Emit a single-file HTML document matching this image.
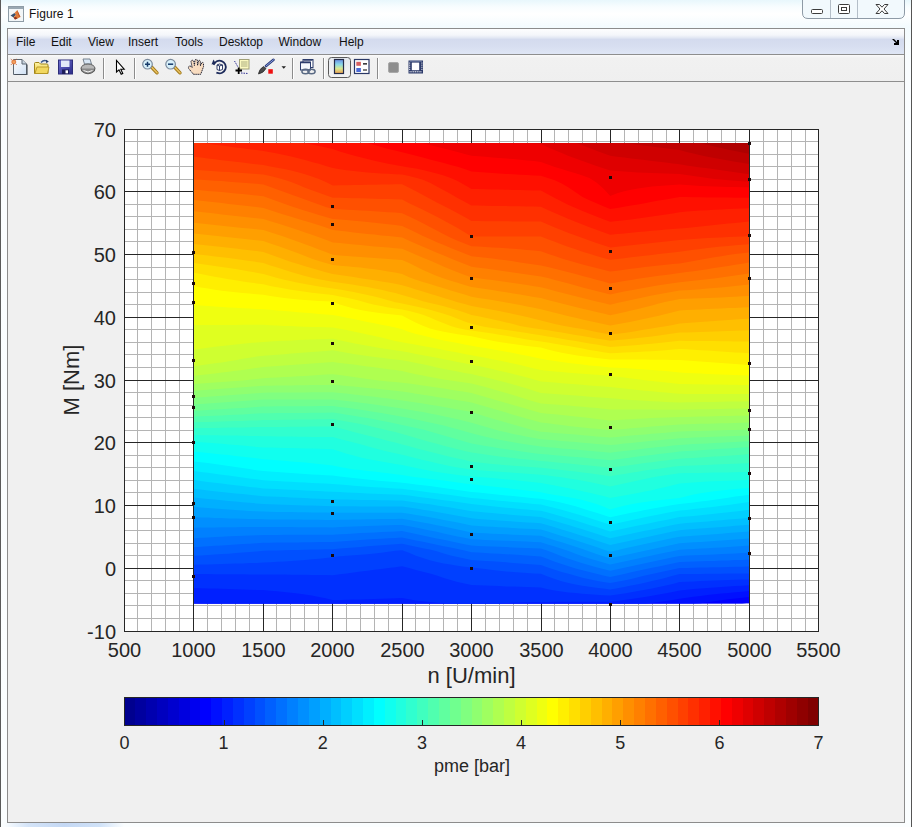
<!DOCTYPE html>
<html><head><meta charset="utf-8"><style>
*{margin:0;padding:0;box-sizing:border-box}
html,body{width:912px;height:827px;overflow:hidden}
body{position:relative;background:linear-gradient(180deg,#e8f7fc 0px,#f8fdff 7px,#ffffff 14px,#f3fbfe 27px,#fafdff 60px,#fbfeff 100%);font-family:"Liberation Sans",sans-serif}
.abs{position:absolute}
#title{left:29px;top:7px;font-size:12px;color:#111;letter-spacing:0.1px}
#client{left:7px;top:28px;width:898px;height:795px;border:1px solid #8c8c8c;background:#f0f0f0}
#menubar{left:0;top:0;width:896px;height:26px;background:linear-gradient(180deg,#fdfdfe 0px,#f4f6fa 6px,#e4e9f4 8.5px,#d4dbee 10.5px,#d7def0 17px,#dfe6f5 25px);border-bottom:1px solid #8e8e8e}
#menubar span{position:absolute;top:6px;font-size:12px;color:#111}
#toolbar{left:0;top:26px;width:896px;height:27px;background:linear-gradient(180deg,#fafafa 0px,#f1f1f1 3px,#efefef 100%);border-bottom:1px solid #8e8e8e}
.sep{position:absolute;top:3px;width:2px;height:21px;background:#8c8c8c;border-right:1px solid #fff}
</style></head><body>
<svg class="abs" style="left:0;top:0" width="912" height="827">
 <path d="M911.5 0V827" stroke="#555" stroke-width="1"/>
 <path d="M0.5 0V827" stroke="#5a5a5a" stroke-width="1"/>
</svg>
<svg class="abs" style="left:8px;top:6px" width="16" height="16" viewBox="0 0 16 16">
 <rect x="0.5" y="0.5" width="15" height="15" fill="#f2f6f8" stroke="#8e9ca6"/>
 <rect x="1" y="1" width="14" height="2" fill="#9aa8b2"/>
 <path d="M2.5 9.5 L6.5 7 L8 8.5 L5.5 11.5 Z" fill="#3a5270"/>
 <path d="M6.5 7 L9.3 4 L11 8 L12.5 11 L9.5 12.5 L7 13.5 L5.5 11.5 L8 8.5 Z" fill="#e07a38"/>
 <path d="M9.3 4 L11 8 L12.5 11 L11 10.5 L9.8 7 Z" fill="#b84c24"/>
 <path d="M5.5 11.5 L7 13.5 L9.5 12.5 L8 11 Z" fill="#8a3020"/>
</svg>
<div id="title" class="abs">Figure 1</div>
<div class="abs" style="left:4px;top:823px;width:120px;height:4px;background:linear-gradient(90deg,rgba(200,222,246,0) 0%,#d4e4f8 20%,#c4d8f4 50%,#d0e2f8 80%,rgba(200,222,246,0) 100%)"></div>
<svg class="abs" style="left:802px;top:0" width="104" height="20">
 <path d="M0.5 0 V13 Q0.5 18.5 6 18.5 H97 Q102.5 18.5 102.5 13 V0" fill="#f2f9fd" stroke="#8e9aa6"/>
 <path d="M28.5 0V18M55.5 0V18" stroke="#b4bec8"/>
 <rect x="9.5" y="9.5" width="11" height="4" rx="1" fill="#fff" stroke="#3c3c3c"/>
 <rect x="36.5" y="4.5" width="11" height="9" rx="1" fill="#fff" stroke="#3c3c3c"/>
 <rect x="39.5" y="7.5" width="5" height="3" fill="#fff" stroke="#3c3c3c"/>
 <path d="M74 4.5 L77.5 4.5 L80 7.2 L82.5 4.5 L86 4.5 L82 9 L86 13.5 L82.5 13.5 L80 10.8 L77.5 13.5 L74 13.5 L78 9 Z" fill="#fff" stroke="#3c3c3c" stroke-linejoin="round"/>
</svg>
<div id="client" class="abs">
 <div id="menubar" class="abs">
  <span style="left:8px">File</span>
  <span style="left:43px">Edit</span>
  <span style="left:80px">View</span>
  <span style="left:120px">Insert</span>
  <span style="left:167px">Tools</span>
  <span style="left:211px">Desktop</span>
  <span style="left:270.5px">Window</span>
  <span style="left:331px">Help</span>
  <svg class="abs" style="left:883px;top:9px" width="10" height="8"><path d="M1 1 L3 1 L6 4 L6 2 L8 2 L8 7 L3 7 L3 5 L5 5 L2 2 Z" fill="#000"/></svg>
 </div>
 <div id="toolbar" class="abs">
  <div class="sep" style="left:95px"></div>
  <div class="sep" style="left:126px"></div>
  <div class="sep" style="left:284px"></div>
  <div class="sep" style="left:315px"></div>
  <div class="sep" style="left:369px"></div>
 </div>
</div>
<svg class="abs" style="left:0;top:0" width="912" height="90">
 <defs>
  <linearGradient id="pg" x1="0" y1="0" x2="1" y2="1"><stop offset="0" stop-color="#ffffff"/><stop offset="1" stop-color="#cfe0f4"/></linearGradient>
  <linearGradient id="fg" x1="0" y1="0" x2="0" y2="1"><stop offset="0" stop-color="#fff6a8"/><stop offset="1" stop-color="#e8c030"/></linearGradient>
  <linearGradient id="cbg" x1="0" y1="0" x2="0" y2="1"><stop offset="0" stop-color="#6a8ee8"/><stop offset="0.35" stop-color="#8ad8e8"/><stop offset="0.65" stop-color="#d8e890"/><stop offset="1" stop-color="#f0a050"/></linearGradient>
  <linearGradient id="btn" x1="0" y1="0" x2="0" y2="1"><stop offset="0" stop-color="#e4e8ee"/><stop offset="1" stop-color="#f4f4f4"/></linearGradient>
  <linearGradient id="sg" x1="0" y1="0" x2="1" y2="1"><stop offset="0" stop-color="#7070d0"/><stop offset="1" stop-color="#2a2a88"/></linearGradient>
 </defs>
 <!-- new -->
 <path d="M13.5 59.5 H22 L26.5 64 V74.5 H13.5 Z" fill="url(#pg)" stroke="#5d6772"/>
 <path d="M22 59.5 V64 H26.5" fill="#c8d4e0" stroke="#5d6772"/>
 <path d="M14.5 74.5 H27 V64.5" fill="none" stroke="#4a525c" stroke-width="1.2"/>
 <circle cx="13.8" cy="62" r="2" fill="#f0a060" stroke="#e06828" stroke-width="0.8"/>
 <path d="M10.8 59 L12 60.2 M16.8 59 L15.6 60.2 M10.8 65 L12 63.8 M16.8 65 L15.6 63.8" stroke="#c05020" stroke-width="0.7"/>
 <!-- open -->
 <path d="M34.5 73.5 V63.5 Q34.5 62.5 35.5 62.5 H39 L40.5 64 H47 Q48 64 48 65 V73.5 Z" fill="url(#fg)" stroke="#a08418"/>
 <path d="M35 73.5 L37 67 H49 L47.5 73.5 Z" fill="#f2d860" stroke="#b09020" stroke-width="0.8"/>
 <path d="M41 62.5 Q43.5 59.5 47 61" fill="none" stroke="#3c5a8c" stroke-width="1.3"/>
 <path d="M46 59.8 L48.8 61.6 L46.2 63.2 Z" fill="#2a3e6a"/>
 <!-- save -->
 <rect x="58.5" y="60" width="14" height="14" fill="url(#sg)" stroke="#2c2c7a"/>
 <rect x="61" y="60.5" width="8.5" height="6.5" fill="#e4eaf8"/>
 <rect x="62" y="69.5" width="7" height="4.5" fill="#1c1c5a"/>
 <rect x="65.5" y="70.3" width="2.5" height="3" fill="#ffffff"/>
 <!-- print -->
 <path d="M83 59 H90 L91.5 64 H84.5 Z" fill="#d8e6f4" stroke="#6c7886" stroke-width="0.9"/>
 <ellipse cx="88" cy="68.5" rx="7" ry="4.5" fill="#b8b8b8" stroke="#5c5c5c"/>
 <path d="M81.5 68.5 V71 Q88 76.5 94.5 71 V68.5" fill="#8a8a8a" stroke="#5c5c5c"/>
 <path d="M83.5 70.5 Q88 73.5 92.5 70.5" stroke="#f4f4f4" stroke-width="1" fill="none"/>
 <!-- arrow -->
 <path d="M116.5 60.5 V72 L119 69.8 L121.2 74.3 L122.8 73.5 L120.8 69.2 H124.2 Z" fill="#fff" stroke="#000" stroke-width="1.1" stroke-linejoin="miter"/>
 <!-- zoom in -->
 <path d="M151.5 67 L157 72.8" stroke="#a07818" stroke-width="3.4" stroke-linecap="round"/>
 <path d="M151.5 67 L157 72.8" stroke="#e8c060" stroke-width="1.6" stroke-linecap="round"/>
 <circle cx="147.5" cy="64.2" r="4.8" fill="#d8f0fa" stroke="#7a8a9c" stroke-width="1.2"/>
 <path d="M145 64.2 H150 M147.5 61.7 V66.7" stroke="#163a6a" stroke-width="1.5"/>
 <!-- zoom out -->
 <path d="M174.5 67 L180 72.8" stroke="#a07818" stroke-width="3.4" stroke-linecap="round"/>
 <path d="M174.5 67 L180 72.8" stroke="#e8c060" stroke-width="1.6" stroke-linecap="round"/>
 <circle cx="170.6" cy="64.2" r="4.8" fill="#d8f0fa" stroke="#7a8a9c" stroke-width="1.2"/>
 <path d="M168 64.2 H173.2" stroke="#163a6a" stroke-width="1.5"/>
 <!-- pan -->
 <path d="M193.5 74.3 L188.6 68.5 Q188 66.5 189.6 66 L191.3 66.4 L192.2 67.6 L191 61.6 Q191.2 60 192.6 60.3 L193.8 61 L194.4 65.5 L195 59.9 Q196 59 197.2 59.8 L197.6 65.3 L198.6 60.6 Q199.6 60 200.3 60.9 L200.4 65.8 L201.8 62.6 Q203 62 203.4 63.1 L203.5 66.7 L200.7 74.3 Z" fill="#f8dcc0" stroke="#1c1c2c" stroke-width="1" stroke-dasharray="1.4 0.7"/>
 <!-- rotate -->
 <circle cx="219.5" cy="67" r="6.3" fill="none" stroke="#1c2a5a" stroke-width="1.8" stroke-dasharray="30 10" transform="rotate(200 219.5 67)"/>
 <path d="M211.5 64.5 L213.5 59.5 L215.8 63.5 Z" fill="#1c2a5a"/>
 <path d="M217 65 L219.5 64 L222.5 65 V69.5 L219.5 70.5 L217 69.5 Z M217 65 L219.5 66 L222.5 65 M219.5 66 V70.5" fill="#fff" stroke="#1c2a5a" stroke-width="0.9"/>
 <!-- data cursor -->
 <rect x="239.5" y="59.5" width="9.5" height="9.5" fill="#fbf8c0" stroke="#a0a078"/>
 <path d="M241 62 H247.5 M241 64 H247.5 M241 66 H247.5" stroke="#9a9a70" stroke-width="0.8"/>
 <path d="M234.5 61 L238 67 M241 73 L248 73.5" stroke="#1a1a8a" stroke-width="0.9" stroke-dasharray="1.5 1"/>
 <path d="M235.5 70.5 H242 M238.7 67.5 V74" stroke="#000" stroke-width="1.8"/>
 <!-- brush -->
 <path d="M266 66 L273.5 59.8" stroke="#2a3a7a" stroke-width="2.6" stroke-linecap="round"/>
 <path d="M266 66 L273.5 59.8" stroke="#8aa0e0" stroke-width="1" stroke-linecap="round"/>
 <path d="M258.5 74 Q259 69 263.5 66.5 L266 68.5 Q263.5 73 258.5 74 Z" fill="#4a4a4a" stroke="#222" stroke-width="0.7"/>
 <rect x="268.3" y="69.2" width="4.5" height="4.5" fill="#ee1010"/>
 <path d="M281.5 66.2 H286 L283.75 68.8 Z" fill="#222"/>
 <!-- link -->
 <rect x="303" y="59.5" width="10" height="8" fill="#fff" stroke="#2c3c6c"/>
 <rect x="300.5" y="62" width="10" height="8" fill="#f4f8fc" stroke="#2c3c6c"/>
 <path d="M303.5 60 H312.5 M301 62.5 H310" stroke="#2c3c6c" stroke-width="1.5"/>
 <ellipse cx="305.5" cy="71.5" rx="3.6" ry="2.3" fill="none" stroke="#5a6a84" stroke-width="1.5"/>
 <ellipse cx="311.5" cy="71.5" rx="3.6" ry="2.3" fill="none" stroke="#5a6a84" stroke-width="1.5"/>
 <!-- pressed colorbar button -->
 <rect x="328.5" y="57.5" width="22" height="20" rx="3" fill="url(#btn)" stroke="#5a5a5a"/>
 <rect x="334.5" y="59.5" width="9" height="14" fill="url(#cbg)" stroke="#242a48" stroke-width="1.2"/>
 <!-- legend -->
 <rect x="354.5" y="59.5" width="14.5" height="14" fill="#fff" stroke="#2a3866" stroke-width="1.2"/>
 <rect x="356.3" y="61.8" width="4.6" height="4" fill="#d86060"/>
 <rect x="356.3" y="68" width="4.6" height="4" fill="#4a6ad8"/>
 <path d="M363 63.8 H367 M363 70 H367" stroke="#000" stroke-width="1.2"/>
 <!-- gray square -->
 <rect x="388.5" y="62.5" width="10" height="10" rx="1.5" fill="#8e8e8e" stroke="#a8a8a8"/>
 <!-- plot tools -->
 <rect x="408.5" y="60.5" width="14.5" height="13" fill="#2c3a6a"/>
 <rect x="411.8" y="62.6" width="7.4" height="7.6" fill="#fff"/>
 <path d="M409.7 62.5 V70 M421.9 62.5 V70" stroke="#fff" stroke-width="0.9" stroke-dasharray="1.2 0.9"/>
 <path d="M409.5 71.8 H422" stroke="#fff" stroke-width="1" stroke-dasharray="1.2 0.6"/>
 <path d="M409.5 61.3 H422" stroke="#8a9ac0" stroke-width="0.6"/>
</svg>

<svg class="abs" style="left:0;top:0" width="912" height="827" font-family="Liberation Sans" shape-rendering="crispEdges">
 <rect x="124" y="129" width="695" height="502" fill="#fff"/>
 <path d="M137.5 129V632M151.5 129V632M165.5 129V632M179.5 129V632M207.5 129V632M221.5 129V632M235.5 129V632M249.5 129V632M276.5 129V632M290.5 129V632M304.5 129V632M318.5 129V632M346.5 129V632M360.5 129V632M374.5 129V632M388.5 129V632M415.5 129V632M429.5 129V632M443.5 129V632M457.5 129V632M485.5 129V632M499.5 129V632M513.5 129V632M527.5 129V632M554.5 129V632M568.5 129V632M582.5 129V632M596.5 129V632M624.5 129V632M638.5 129V632M652.5 129V632M666.5 129V632M693.5 129V632M707.5 129V632M721.5 129V632M735.5 129V632M763.5 129V632M777.5 129V632M791.5 129V632M805.5 129V632M124 141.5H819M124 154.5H819M124 166.5H819M124 179.5H819M124 204.5H819M124 216.5H819M124 229.5H819M124 241.5H819M124 267.5H819M124 279.5H819M124 292.5H819M124 304.5H819M124 329.5H819M124 342.5H819M124 354.5H819M124 367.5H819M124 392.5H819M124 405.5H819M124 417.5H819M124 430.5H819M124 455.5H819M124 467.5H819M124 480.5H819M124 492.5H819M124 518.5H819M124 530.5H819M124 543.5H819M124 555.5H819M124 580.5H819M124 593.5H819M124 605.5H819M124 618.5H819" stroke="#b4b4b4" stroke-width="1" fill="none"/>
 <path d="M124.5 129V632M193.5 129V632M263.5 129V632M332.5 129V632M402.5 129V632M471.5 129V632M541.5 129V632M610.5 129V632M679.5 129V632M749.5 129V632M818.5 129V632M124 129.5H819M124 191.5H819M124 254.5H819M124 317.5H819M124 380.5H819M124 442.5H819M124 505.5H819M124 568.5H819M124 631.5H819" stroke="#262626" stroke-width="1" fill="none"/>
 <g shape-rendering="auto">
<rect x="194.0" y="143.0" width="555.0" height="460.4" fill="#0000ef"/>
<path d="M194.0 143.0 L194.0 603.5 L200.9 603.5 L207.9 603.5 L214.8 603.5 L221.8 603.5 L228.7 603.5 L235.6 603.5 L242.6 603.5 L249.5 603.5 L256.4 603.5 L263.4 603.5 L270.3 603.5 L277.2 603.5 L284.2 603.5 L291.1 603.5 L298.1 603.5 L305.0 603.5 L311.9 603.5 L318.9 603.5 L325.8 603.5 L332.8 603.5 L339.7 603.5 L346.6 603.5 L353.6 603.5 L360.5 603.5 L367.4 603.5 L374.4 603.5 L381.3 603.5 L388.2 603.5 L395.2 603.5 L402.1 603.5 L409.1 603.5 L416.0 603.5 L422.9 603.5 L429.9 603.5 L436.8 603.5 L443.8 603.5 L450.7 603.5 L457.6 603.5 L464.6 603.5 L471.5 603.5 L478.4 603.5 L485.4 603.5 L492.3 603.5 L499.2 603.5 L506.2 603.5 L513.1 603.5 L520.1 603.5 L527.0 603.5 L533.9 603.5 L540.9 603.5 L547.8 603.5 L554.8 603.5 L561.7 603.5 L568.6 603.5 L575.6 603.5 L582.5 603.5 L589.4 603.5 L596.4 603.5 L603.3 603.5 L610.2 603.5 L617.2 603.5 L624.1 603.5 L631.1 603.5 L638.0 603.5 L644.9 603.5 L651.9 603.5 L658.8 603.5 L665.8 603.5 L672.7 603.5 L679.6 603.5 L686.6 603.5 L693.5 603.5 L700.4 603.5 L707.4 603.5 L714.3 603.5 L721.2 603.5 L728.2 603.5 L735.1 603.5 L742.1 603.5 L749.0 602.8 L749.0 143.0 Z" fill="#0000ff"/>
<path d="M194.0 143.0 L194.0 603.5 L200.9 603.5 L207.9 603.5 L214.8 603.5 L221.8 603.5 L228.7 603.5 L235.6 603.5 L242.6 603.5 L249.5 603.5 L256.4 603.5 L263.4 603.5 L270.3 603.5 L277.2 603.5 L284.2 603.5 L291.1 603.5 L298.1 603.5 L305.0 603.5 L311.9 603.5 L318.9 603.5 L325.8 603.5 L332.8 603.5 L339.7 603.5 L346.6 603.5 L353.6 603.5 L360.5 603.5 L367.4 603.5 L374.4 603.5 L381.3 603.5 L388.2 603.5 L395.2 603.5 L402.1 603.5 L409.1 603.5 L416.0 603.5 L422.9 603.5 L429.9 603.5 L436.8 603.5 L443.8 603.5 L450.7 603.5 L457.6 603.5 L464.6 603.5 L471.5 603.5 L478.4 603.5 L485.4 603.5 L492.3 603.5 L499.2 603.5 L506.2 603.5 L513.1 603.5 L520.1 603.5 L527.0 603.5 L533.9 603.5 L540.9 603.5 L547.8 603.5 L554.8 603.5 L561.7 603.5 L568.6 603.5 L575.6 603.5 L582.5 603.5 L589.4 603.5 L596.4 603.5 L603.3 603.5 L610.2 603.5 L617.2 603.5 L624.1 603.5 L631.1 603.5 L638.0 603.5 L644.9 603.5 L651.9 603.5 L658.8 603.5 L665.8 603.5 L672.7 603.5 L679.6 603.5 L686.6 603.5 L693.5 603.5 L700.4 603.3 L707.4 602.2 L714.3 601.2 L721.2 600.2 L728.2 599.3 L735.1 598.5 L742.1 597.7 L749.0 597.0 L749.0 143.0 Z" fill="#0010ff"/>
<path d="M194.0 143.0 L194.0 603.1 L200.9 603.3 L207.9 603.5 L214.8 603.5 L221.8 603.5 L228.7 603.5 L235.6 603.5 L242.6 603.5 L249.5 603.5 L256.4 603.5 L263.4 603.5 L270.3 603.5 L277.2 603.5 L284.2 603.5 L291.1 603.5 L298.1 603.5 L305.0 603.5 L311.9 603.5 L318.9 603.5 L325.8 603.5 L332.8 603.5 L339.7 603.5 L346.6 603.5 L353.6 603.5 L360.5 603.5 L367.4 603.5 L374.4 603.5 L381.3 603.5 L388.2 603.5 L395.2 603.5 L402.1 603.5 L409.1 603.5 L416.0 603.5 L422.9 603.5 L429.9 603.5 L436.8 603.5 L443.8 603.5 L450.7 603.5 L457.6 603.5 L464.6 603.5 L471.5 603.5 L478.4 603.5 L485.4 603.5 L492.3 603.5 L499.2 603.5 L506.2 603.5 L513.1 603.5 L520.1 603.5 L527.0 603.5 L533.9 603.5 L540.9 603.5 L547.8 603.5 L554.8 603.5 L561.7 603.5 L568.6 603.5 L575.6 603.5 L582.5 603.5 L589.4 603.5 L596.4 603.5 L603.3 603.5 L610.2 603.5 L617.2 603.5 L624.1 603.5 L631.1 603.5 L638.0 603.5 L644.9 603.5 L651.9 603.1 L658.8 602.1 L665.8 601.1 L672.7 600.0 L679.6 598.8 L686.6 597.7 L693.5 596.8 L700.4 595.9 L707.4 595.1 L714.3 594.3 L721.2 593.6 L728.2 592.9 L735.1 592.3 L742.1 591.7 L749.0 591.1 L749.0 143.0 Z" fill="#0020ff"/>
<path d="M194.0 143.0 L194.0 588.0 L200.9 588.2 L207.9 588.4 L214.8 588.6 L221.8 588.8 L228.7 589.0 L235.6 589.2 L242.6 589.5 L249.5 589.7 L256.4 589.9 L263.4 590.1 L270.3 590.7 L277.2 591.3 L284.2 592.0 L291.1 592.7 L298.1 593.6 L305.0 594.5 L311.9 595.6 L318.9 596.9 L325.8 598.3 L332.8 600.0 L339.7 599.9 L346.6 599.7 L353.6 599.6 L360.5 599.4 L367.4 599.2 L374.4 599.0 L381.3 598.8 L388.2 598.6 L395.2 598.3 L402.1 598.0 L409.1 599.3 L416.0 600.4 L422.9 601.3 L429.9 602.1 L436.8 602.7 L443.8 603.2 L450.7 603.5 L457.6 603.5 L464.6 603.5 L471.5 603.5 L478.4 603.5 L485.4 603.5 L492.3 603.5 L499.2 603.4 L506.2 603.1 L513.1 602.8 L520.1 602.5 L527.0 602.3 L533.9 602.1 L540.9 601.9 L547.8 601.9 L554.8 601.8 L561.7 601.8 L568.6 601.8 L575.6 601.8 L582.5 601.8 L589.4 601.8 L596.4 601.8 L603.3 601.8 L610.2 601.8 L617.2 600.9 L624.1 600.0 L631.1 599.1 L638.0 598.0 L644.9 596.9 L651.9 595.8 L658.8 594.6 L665.8 593.3 L672.7 591.9 L679.6 590.5 L686.6 589.8 L693.5 589.1 L700.4 588.5 L707.4 587.9 L714.3 587.4 L721.2 586.9 L728.2 586.5 L735.1 586.1 L742.1 585.7 L749.0 585.3 L749.0 143.0 Z" fill="#0030ff"/>
<path d="M194.0 143.0 L194.0 574.1 L200.9 574.1 L207.9 574.1 L214.8 574.2 L221.8 574.2 L228.7 574.2 L235.6 574.3 L242.6 574.3 L249.5 574.4 L256.4 574.4 L263.4 574.4 L270.3 574.5 L277.2 574.5 L284.2 574.6 L291.1 574.7 L298.1 574.8 L305.0 574.8 L311.9 574.9 L318.9 575.0 L325.8 575.1 L332.8 575.2 L339.7 574.3 L346.6 573.4 L353.6 572.5 L360.5 571.6 L367.4 570.7 L374.4 569.8 L381.3 568.9 L388.2 568.1 L395.2 567.2 L402.1 566.3 L409.1 568.1 L416.0 569.9 L422.9 571.7 L429.9 573.5 L436.8 575.6 L443.8 578.0 L450.7 580.1 L457.6 581.9 L464.6 583.5 L471.5 584.9 L478.4 585.2 L485.4 585.5 L492.3 585.8 L499.2 586.1 L506.2 586.4 L513.1 586.6 L520.1 586.8 L527.0 587.1 L533.9 587.3 L540.9 587.5 L547.8 589.2 L554.8 590.5 L561.7 591.5 L568.6 592.4 L575.6 593.1 L582.5 593.8 L589.4 594.3 L596.4 594.8 L603.3 595.2 L610.2 595.6 L617.2 594.6 L624.1 593.5 L631.1 592.3 L638.0 591.1 L644.9 589.8 L651.9 588.5 L658.8 587.0 L665.8 585.5 L672.7 583.9 L679.6 582.1 L686.6 581.8 L693.5 581.4 L700.4 581.1 L707.4 580.8 L714.3 580.5 L721.2 580.3 L728.2 580.1 L735.1 579.8 L742.1 579.6 L749.0 579.4 L749.0 143.0 Z" fill="#0040ff"/>
<path d="M194.0 143.0 L194.0 564.8 L200.9 564.6 L207.9 564.4 L214.8 564.2 L221.8 564.0 L228.7 563.8 L235.6 563.6 L242.6 563.4 L249.5 563.1 L256.4 562.9 L263.4 562.6 L270.3 562.2 L277.2 561.8 L284.2 561.4 L291.1 560.9 L298.1 560.4 L305.0 559.9 L311.9 559.3 L318.9 558.7 L325.8 558.0 L332.8 557.2 L339.7 556.3 L346.6 555.7 L353.6 555.3 L360.5 554.8 L367.4 554.2 L374.4 553.5 L381.3 552.7 L388.2 551.7 L395.2 550.7 L402.1 550.2 L409.1 552.7 L416.0 555.7 L422.9 558.1 L429.9 560.2 L436.8 561.9 L443.8 563.4 L450.7 564.6 L457.6 565.8 L464.6 566.7 L471.5 567.6 L478.4 568.2 L485.4 569.0 L492.3 569.9 L499.2 570.7 L506.2 571.4 L513.1 572.0 L520.1 572.5 L527.0 573.0 L533.9 573.4 L540.9 573.8 L547.8 576.5 L554.8 579.1 L561.7 581.2 L568.6 583.0 L575.6 584.5 L582.5 585.7 L589.4 586.8 L596.4 587.8 L603.3 588.6 L610.2 589.4 L617.2 588.2 L624.1 586.9 L631.1 585.6 L638.0 584.2 L644.9 582.7 L651.9 581.1 L658.8 579.5 L665.8 577.7 L672.7 575.8 L679.6 574.1 L686.6 574.0 L693.5 574.0 L700.4 573.9 L707.4 573.8 L714.3 573.7 L721.2 573.7 L728.2 573.6 L735.1 573.5 L742.1 573.4 L749.0 573.4 L749.0 143.0 Z" fill="#0050ff"/>
<path d="M194.0 143.0 L194.0 555.8 L200.9 555.4 L207.9 555.0 L214.8 554.6 L221.8 554.1 L228.7 553.7 L235.6 553.1 L242.6 552.6 L249.5 552.0 L256.4 551.4 L263.4 550.8 L270.3 550.6 L277.2 550.4 L284.2 550.3 L291.1 550.1 L298.1 549.9 L305.0 549.8 L311.9 549.6 L318.9 549.5 L325.8 549.3 L332.8 549.2 L339.7 548.6 L346.6 548.0 L353.6 547.4 L360.5 546.9 L367.4 546.3 L374.4 545.8 L381.3 545.3 L388.2 544.8 L395.2 544.3 L402.1 543.8 L409.1 545.3 L416.0 546.7 L422.9 548.2 L429.9 549.6 L436.8 551.2 L443.8 553.5 L450.7 555.4 L457.6 557.1 L464.6 558.6 L471.5 559.9 L478.4 560.4 L485.4 560.9 L492.3 561.3 L499.2 561.8 L506.2 562.3 L513.1 562.9 L520.1 563.4 L527.0 563.9 L533.9 564.5 L540.9 565.1 L547.8 567.5 L554.8 569.8 L561.7 571.9 L568.6 573.8 L575.6 575.8 L582.5 577.7 L589.4 579.3 L596.4 580.8 L603.3 582.0 L610.2 583.1 L617.2 581.8 L624.1 580.4 L631.1 578.9 L638.0 577.3 L644.9 575.6 L651.9 574.0 L658.8 572.5 L665.8 571.0 L672.7 569.5 L679.6 568.0 L686.6 567.9 L693.5 567.7 L700.4 567.6 L707.4 567.5 L714.3 567.3 L721.2 567.2 L728.2 567.0 L735.1 566.8 L742.1 566.7 L749.0 566.5 L749.0 143.0 Z" fill="#0060ff"/>
<path d="M194.0 143.0 L194.0 547.2 L200.9 546.7 L207.9 546.3 L214.8 545.8 L221.8 545.4 L228.7 544.9 L235.6 544.5 L242.6 544.1 L249.5 543.7 L256.4 543.2 L263.4 542.8 L270.3 542.7 L277.2 542.6 L284.2 542.5 L291.1 542.5 L298.1 542.4 L305.0 542.3 L311.9 542.2 L318.9 542.1 L325.8 542.0 L332.8 541.9 L339.7 541.4 L346.6 540.9 L353.6 540.5 L360.5 540.0 L367.4 539.6 L374.4 539.1 L381.3 538.7 L388.2 538.3 L395.2 537.9 L402.1 537.5 L409.1 538.9 L416.0 540.4 L422.9 541.8 L429.9 543.3 L436.8 544.7 L443.8 546.2 L450.7 547.6 L457.6 549.1 L464.6 550.6 L471.5 552.2 L478.4 552.6 L485.4 553.0 L492.3 553.4 L499.2 553.8 L506.2 554.2 L513.1 554.6 L520.1 555.0 L527.0 555.5 L533.9 555.9 L540.9 556.4 L547.8 559.1 L554.8 561.7 L561.7 564.1 L568.6 566.3 L575.6 568.4 L582.5 570.3 L589.4 572.1 L596.4 573.8 L603.3 575.4 L610.2 576.9 L617.2 575.4 L624.1 573.9 L631.1 572.3 L638.0 570.8 L644.9 569.3 L651.9 567.8 L658.8 566.4 L665.8 564.9 L672.7 563.4 L679.6 561.9 L686.6 561.7 L693.5 561.5 L700.4 561.3 L707.4 561.1 L714.3 560.9 L721.2 560.6 L728.2 560.4 L735.1 560.1 L742.1 559.9 L749.0 559.6 L749.0 143.0 Z" fill="#0070ff"/>
<path d="M194.0 143.0 L194.0 538.2 L200.9 537.8 L207.9 537.4 L214.8 537.0 L221.8 536.7 L228.7 536.3 L235.6 536.0 L242.6 535.7 L249.5 535.4 L256.4 535.2 L263.4 534.9 L270.3 534.9 L277.2 534.9 L284.2 534.8 L291.1 534.8 L298.1 534.8 L305.0 534.8 L311.9 534.7 L318.9 534.7 L325.8 534.7 L332.8 534.7 L339.7 534.3 L346.6 533.9 L353.6 533.5 L360.5 533.1 L367.4 532.8 L374.4 532.4 L381.3 532.1 L388.2 531.8 L395.2 531.4 L402.1 531.1 L409.1 532.5 L416.0 534.0 L422.9 535.5 L429.9 536.9 L436.8 538.4 L443.8 539.8 L450.7 541.3 L457.6 542.7 L464.6 544.2 L471.5 545.6 L478.4 545.9 L485.4 546.2 L492.3 546.5 L499.2 546.8 L506.2 547.1 L513.1 547.4 L520.1 547.7 L527.0 548.0 L533.9 548.3 L540.9 548.6 L547.8 550.8 L554.8 553.6 L561.7 556.3 L568.6 558.8 L575.6 561.1 L582.5 563.3 L589.4 565.3 L596.4 567.2 L603.3 569.0 L610.2 570.7 L617.2 569.2 L624.1 567.7 L631.1 566.2 L638.0 564.7 L644.9 563.2 L651.9 561.7 L658.8 560.2 L665.8 558.8 L672.7 557.3 L679.6 555.9 L686.6 555.6 L693.5 555.3 L700.4 555.0 L707.4 554.7 L714.3 554.4 L721.2 554.1 L728.2 553.8 L735.1 553.4 L742.1 553.1 L749.0 552.7 L749.0 143.0 Z" fill="#0080ff"/>
<path d="M194.0 143.0 L194.0 527.7 L200.9 527.6 L207.9 527.5 L214.8 527.4 L221.8 527.3 L228.7 527.3 L235.6 527.2 L242.6 527.1 L249.5 527.1 L256.4 527.0 L263.4 527.0 L270.3 527.0 L277.2 527.1 L284.2 527.1 L291.1 527.1 L298.1 527.2 L305.0 527.2 L311.9 527.2 L318.9 527.3 L325.8 527.3 L332.8 527.4 L339.7 527.1 L346.6 526.8 L353.6 526.5 L360.5 526.3 L367.4 526.0 L374.4 525.8 L381.3 525.5 L388.2 525.3 L395.2 525.1 L402.1 524.9 L409.1 526.2 L416.0 527.5 L422.9 528.9 L429.9 530.4 L436.8 531.8 L443.8 533.4 L450.7 534.9 L457.6 536.4 L464.6 537.8 L471.5 539.3 L478.4 539.6 L485.4 539.9 L492.3 540.2 L499.2 540.5 L506.2 540.7 L513.1 541.0 L520.1 541.3 L527.0 541.6 L533.9 541.9 L540.9 542.2 L547.8 544.4 L554.8 546.6 L561.7 548.8 L568.6 551.1 L575.6 553.7 L582.5 556.2 L589.4 558.5 L596.4 560.6 L603.3 562.6 L610.2 564.5 L617.2 563.0 L624.1 561.5 L631.1 560.0 L638.0 558.5 L644.9 557.0 L651.9 555.6 L658.8 554.1 L665.8 552.6 L672.7 551.2 L679.6 549.7 L686.6 549.3 L693.5 549.0 L700.4 548.6 L707.4 548.2 L714.3 547.8 L721.2 547.4 L728.2 546.9 L735.1 546.5 L742.1 546.1 L749.0 545.6 L749.0 143.0 Z" fill="#008fff"/>
<path d="M194.0 143.0 L194.0 517.1 L200.9 517.4 L207.9 517.6 L214.8 517.9 L221.8 518.1 L228.7 518.4 L235.6 518.6 L242.6 518.8 L249.5 519.0 L256.4 519.1 L263.4 519.3 L270.3 519.4 L277.2 519.4 L284.2 519.5 L291.1 519.6 L298.1 519.6 L305.0 519.7 L311.9 519.8 L318.9 519.8 L325.8 519.9 L332.8 520.0 L339.7 519.8 L346.6 519.7 L353.6 519.6 L360.5 519.4 L367.4 519.3 L374.4 519.2 L381.3 519.1 L388.2 519.0 L395.2 518.9 L402.1 518.8 L409.1 520.0 L416.0 521.2 L422.9 522.5 L429.9 523.8 L436.8 525.2 L443.8 526.6 L450.7 528.0 L457.6 529.5 L464.6 531.1 L471.5 532.6 L478.4 533.0 L485.4 533.3 L492.3 533.7 L499.2 534.0 L506.2 534.3 L513.1 534.7 L520.1 535.0 L527.0 535.3 L533.9 535.6 L540.9 535.8 L547.8 538.0 L554.8 540.2 L561.7 542.3 L568.6 544.6 L575.6 546.8 L582.5 549.1 L589.4 551.4 L596.4 553.9 L603.3 556.2 L610.2 558.3 L617.2 556.8 L624.1 555.2 L631.1 553.7 L638.0 552.2 L644.9 550.7 L651.9 549.2 L658.8 547.7 L665.8 546.2 L672.7 544.7 L679.6 543.2 L686.6 542.8 L693.5 542.3 L700.4 541.9 L707.4 541.4 L714.3 541.0 L721.2 540.5 L728.2 540.0 L735.1 539.5 L742.1 539.0 L749.0 538.5 L749.0 143.0 Z" fill="#009fff"/>
<path d="M194.0 143.0 L194.0 506.8 L200.9 507.4 L207.9 508.0 L214.8 508.5 L221.8 509.1 L228.7 509.5 L235.6 510.0 L242.6 510.4 L249.5 510.9 L256.4 511.3 L263.4 511.6 L270.3 511.8 L277.2 511.9 L284.2 512.0 L291.1 512.1 L298.1 512.2 L305.0 512.3 L311.9 512.4 L318.9 512.5 L325.8 512.6 L332.8 512.7 L339.7 512.7 L346.6 512.7 L353.6 512.7 L360.5 512.7 L367.4 512.7 L374.4 512.7 L381.3 512.7 L388.2 512.7 L395.2 512.7 L402.1 512.7 L409.1 513.8 L416.0 514.9 L422.9 516.1 L429.9 517.3 L436.8 518.6 L443.8 519.9 L450.7 521.2 L457.6 522.6 L464.6 524.0 L471.5 525.5 L478.4 525.9 L485.4 526.4 L492.3 526.8 L499.2 527.2 L506.2 527.6 L513.1 528.0 L520.1 528.4 L527.0 528.8 L533.9 529.1 L540.9 529.5 L547.8 531.6 L554.8 533.7 L561.7 535.9 L568.6 538.1 L575.6 540.3 L582.5 542.5 L589.4 544.8 L596.4 547.0 L603.3 549.4 L610.2 551.7 L617.2 550.2 L624.1 548.6 L631.1 547.1 L638.0 545.6 L644.9 544.1 L651.9 542.6 L658.8 541.1 L665.8 539.6 L672.7 538.1 L679.6 536.7 L686.6 536.2 L693.5 535.7 L700.4 535.2 L707.4 534.7 L714.3 534.2 L721.2 533.7 L728.2 533.1 L735.1 532.6 L742.1 532.1 L749.0 531.5 L749.0 143.0 Z" fill="#00afff"/>
<path d="M194.0 143.0 L194.0 497.6 L200.9 498.3 L207.9 499.0 L214.8 499.6 L221.8 500.3 L228.7 500.9 L235.6 501.6 L242.6 502.2 L249.5 502.8 L256.4 503.4 L263.4 503.9 L270.3 504.2 L277.2 504.5 L284.2 504.7 L291.1 504.9 L298.1 505.2 L305.0 505.4 L311.9 505.6 L318.9 505.8 L325.8 506.0 L332.8 506.2 L339.7 506.3 L346.6 506.3 L353.6 506.3 L360.5 506.4 L367.4 506.4 L374.4 506.4 L381.3 506.5 L388.2 506.5 L395.2 506.5 L402.1 506.6 L409.1 507.6 L416.0 508.6 L422.9 509.7 L429.9 510.8 L436.8 512.0 L443.8 513.2 L450.7 514.4 L457.6 515.7 L464.6 517.0 L471.5 518.3 L478.4 518.9 L485.4 519.4 L492.3 520.0 L499.2 520.5 L506.2 521.0 L513.1 521.4 L520.1 521.9 L527.0 522.4 L533.9 522.8 L540.9 523.2 L547.8 525.3 L554.8 527.3 L561.7 529.4 L568.6 531.6 L575.6 533.7 L582.5 535.9 L589.4 538.1 L596.4 540.4 L603.3 542.7 L610.2 545.0 L617.2 543.4 L624.1 541.9 L631.1 540.4 L638.0 538.9 L644.9 537.4 L651.9 536.0 L658.8 534.5 L665.8 533.1 L672.7 531.6 L679.6 530.2 L686.6 529.6 L693.5 529.1 L700.4 528.6 L707.4 528.0 L714.3 527.5 L721.2 526.9 L728.2 526.4 L735.1 525.8 L742.1 525.2 L749.0 524.7 L749.0 143.0 Z" fill="#00bfff"/>
<path d="M194.0 143.0 L194.0 488.8 L200.9 489.6 L207.9 490.4 L214.8 491.2 L221.8 492.0 L228.7 492.7 L235.6 493.4 L242.6 494.1 L249.5 494.8 L256.4 495.5 L263.4 496.2 L270.3 496.5 L277.2 496.8 L284.2 497.1 L291.1 497.5 L298.1 497.8 L305.0 498.1 L311.9 498.4 L318.9 498.7 L325.8 499.0 L332.8 499.3 L339.7 499.5 L346.6 499.6 L353.6 499.8 L360.5 499.9 L367.4 500.0 L374.4 500.1 L381.3 500.2 L388.2 500.3 L395.2 500.4 L402.1 500.5 L409.1 501.5 L416.0 502.4 L422.9 503.4 L429.9 504.3 L436.8 505.4 L443.8 506.5 L450.7 507.6 L457.6 508.7 L464.6 509.9 L471.5 511.2 L478.4 511.8 L485.4 512.5 L492.3 513.1 L499.2 513.7 L506.2 514.3 L513.1 514.9 L520.1 515.4 L527.0 516.0 L533.9 516.5 L540.9 517.0 L547.8 519.0 L554.8 521.0 L561.7 523.0 L568.6 525.1 L575.6 527.2 L582.5 529.3 L589.4 531.5 L596.4 533.7 L603.3 536.0 L610.2 538.2 L617.2 536.7 L624.1 535.2 L631.1 533.7 L638.0 532.3 L644.9 530.8 L651.9 529.4 L658.8 527.9 L665.8 526.5 L672.7 525.1 L679.6 523.7 L686.6 523.1 L693.5 522.5 L700.4 522.0 L707.4 521.4 L714.3 520.8 L721.2 520.2 L728.2 519.6 L735.1 519.0 L742.1 518.4 L749.0 517.7 L749.0 143.0 Z" fill="#00cfff"/>
<path d="M194.0 143.0 L194.0 480.1 L200.9 481.0 L207.9 481.9 L214.8 482.8 L221.8 483.6 L228.7 484.5 L235.6 485.3 L242.6 486.1 L249.5 486.9 L256.4 487.6 L263.4 488.4 L270.3 488.7 L277.2 489.1 L284.2 489.4 L291.1 489.8 L298.1 490.1 L305.0 490.4 L311.9 490.8 L318.9 491.1 L325.8 491.5 L332.8 491.8 L339.7 492.1 L346.6 492.5 L353.6 492.8 L360.5 493.1 L367.4 493.4 L374.4 493.7 L381.3 493.9 L388.2 494.2 L395.2 494.4 L402.1 494.7 L409.1 495.6 L416.0 496.5 L422.9 497.4 L429.9 498.3 L436.8 499.3 L443.8 500.2 L450.7 501.1 L457.6 502.1 L464.6 503.0 L471.5 504.0 L478.4 504.8 L485.4 505.5 L492.3 506.3 L499.2 507.0 L506.2 507.7 L513.1 508.3 L520.1 509.0 L527.0 509.6 L533.9 510.2 L540.9 510.8 L547.8 512.6 L554.8 514.5 L561.7 516.4 L568.6 518.5 L575.6 520.6 L582.5 522.8 L589.4 524.9 L596.4 527.1 L603.3 529.3 L610.2 531.5 L617.2 530.0 L624.1 528.5 L631.1 527.1 L638.0 525.6 L644.9 524.2 L651.9 522.8 L658.8 521.3 L665.8 519.9 L672.7 518.5 L679.6 517.1 L686.6 516.5 L693.5 515.9 L700.4 515.2 L707.4 514.5 L714.3 513.8 L721.2 513.1 L728.2 512.3 L735.1 511.5 L742.1 510.7 L749.0 509.8 L749.0 143.0 Z" fill="#00dfff"/>
<path d="M194.0 143.0 L194.0 470.9 L200.9 471.9 L207.9 472.8 L214.8 473.8 L221.8 474.7 L228.7 475.6 L235.6 476.6 L242.6 477.5 L249.5 478.4 L256.4 479.3 L263.4 480.3 L270.3 480.7 L277.2 481.1 L284.2 481.4 L291.1 481.8 L298.1 482.2 L305.0 482.5 L311.9 482.9 L318.9 483.2 L325.8 483.5 L332.8 483.9 L339.7 484.5 L346.6 485.1 L353.6 485.7 L360.5 486.2 L367.4 486.7 L374.4 487.2 L381.3 487.6 L388.2 488.0 L395.2 488.4 L402.1 488.8 L409.1 489.7 L416.0 490.6 L422.9 491.5 L429.9 492.4 L436.8 493.3 L443.8 494.2 L450.7 495.1 L457.6 496.1 L464.6 497.0 L471.5 497.9 L478.4 498.6 L485.4 499.3 L492.3 500.0 L499.2 500.7 L506.2 501.3 L513.1 502.0 L520.1 502.6 L527.0 503.3 L533.9 503.9 L540.9 504.6 L547.8 506.2 L554.8 507.9 L561.7 509.8 L568.6 511.7 L575.6 513.7 L582.5 515.8 L589.4 517.9 L596.4 520.2 L603.3 522.6 L610.2 524.7 L617.2 523.3 L624.1 521.8 L631.1 520.2 L638.0 518.7 L644.9 517.2 L651.9 515.8 L658.8 514.4 L665.8 513.1 L672.7 511.8 L679.6 510.6 L686.6 509.9 L693.5 509.1 L700.4 508.3 L707.4 507.5 L714.3 506.7 L721.2 505.8 L728.2 504.9 L735.1 504.0 L742.1 503.0 L749.0 501.9 L749.0 143.0 Z" fill="#00efff"/>
<path d="M194.0 143.0 L194.0 461.5 L200.9 462.3 L207.9 463.1 L214.8 464.0 L221.8 464.9 L228.7 465.9 L235.6 466.9 L242.6 467.9 L249.5 469.1 L256.4 470.2 L263.4 471.1 L270.3 471.6 L277.2 472.1 L284.2 472.6 L291.1 473.0 L298.1 473.5 L305.0 473.9 L311.9 474.4 L318.9 474.8 L325.8 475.2 L332.8 475.6 L339.7 476.4 L346.6 477.3 L353.6 478.0 L360.5 478.8 L367.4 479.5 L374.4 480.2 L381.3 480.9 L388.2 481.5 L395.2 482.1 L402.1 482.7 L409.1 483.6 L416.0 484.4 L422.9 485.2 L429.9 486.0 L436.8 486.9 L443.8 487.9 L450.7 488.9 L457.6 490.0 L464.6 491.0 L471.5 491.9 L478.4 492.6 L485.4 493.3 L492.3 494.0 L499.2 494.8 L506.2 495.4 L513.1 496.1 L520.1 496.8 L527.0 497.5 L533.9 498.2 L540.9 498.8 L547.8 500.0 L554.8 501.3 L561.7 502.7 L568.6 504.4 L575.6 506.3 L582.5 508.5 L589.4 510.7 L596.4 512.8 L603.3 515.0 L610.2 517.3 L617.2 515.8 L624.1 514.3 L631.1 512.8 L638.0 511.4 L644.9 510.1 L651.9 508.7 L658.8 507.4 L665.8 506.2 L672.7 505.1 L679.6 504.1 L686.6 503.3 L693.5 502.5 L700.4 501.6 L707.4 500.7 L714.3 499.8 L721.2 498.8 L728.2 497.7 L735.1 496.6 L742.1 495.7 L749.0 494.8 L749.0 143.0 Z" fill="#00ffff"/>
<path d="M194.0 143.0 L194.0 451.7 L200.9 452.3 L207.9 453.0 L214.8 453.7 L221.8 454.4 L228.7 455.1 L235.6 455.9 L242.6 456.7 L249.5 457.5 L256.4 458.3 L263.4 459.3 L270.3 459.7 L277.2 460.2 L284.2 460.8 L291.1 461.4 L298.1 462.0 L305.0 462.6 L311.9 463.3 L318.9 464.0 L325.8 464.7 L332.8 465.5 L339.7 467.0 L346.6 468.3 L353.6 469.4 L360.5 470.1 L367.4 470.9 L374.4 471.6 L381.3 472.4 L388.2 473.3 L395.2 474.2 L402.1 475.1 L409.1 476.3 L416.0 477.3 L422.9 478.1 L429.9 478.9 L436.8 479.7 L443.8 480.6 L450.7 481.5 L457.6 482.4 L464.6 483.4 L471.5 484.3 L478.4 485.1 L485.4 485.8 L492.3 486.5 L499.2 487.3 L506.2 488.1 L513.1 488.9 L520.1 489.7 L527.0 490.5 L533.9 491.3 L540.9 492.3 L547.8 493.7 L554.8 494.9 L561.7 496.0 L568.6 497.2 L575.6 498.5 L582.5 500.1 L589.4 501.9 L596.4 504.0 L603.3 506.5 L610.2 509.5 L617.2 507.5 L624.1 505.8 L631.1 504.3 L638.0 503.1 L644.9 502.0 L651.9 501.0 L658.8 500.2 L665.8 499.4 L672.7 498.8 L679.6 498.1 L686.6 496.2 L693.5 494.6 L700.4 493.3 L707.4 492.2 L714.3 491.3 L721.2 490.5 L728.2 489.8 L735.1 489.1 L742.1 488.6 L749.0 488.1 L749.0 143.0 Z" fill="#10ffef"/>
<path d="M194.0 143.0 L194.0 442.0 L200.9 442.3 L207.9 442.7 L214.8 443.2 L221.8 443.8 L228.7 444.4 L235.6 445.0 L242.6 445.6 L249.5 446.2 L256.4 446.9 L263.4 447.5 L270.3 447.6 L277.2 447.8 L284.2 447.9 L291.1 448.1 L298.1 448.2 L305.0 448.4 L311.9 448.6 L318.9 448.8 L325.8 449.0 L332.8 449.2 L339.7 451.6 L346.6 453.7 L353.6 455.6 L360.5 457.4 L367.4 458.9 L374.4 460.3 L381.3 461.6 L388.2 462.8 L395.2 463.9 L402.1 465.0 L409.1 466.6 L416.0 468.1 L422.9 469.4 L429.9 470.7 L436.8 471.9 L443.8 472.9 L450.7 473.9 L457.6 474.9 L464.6 475.7 L471.5 476.5 L478.4 477.0 L485.4 477.5 L492.3 478.1 L499.2 478.7 L506.2 479.4 L513.1 480.0 L520.1 480.8 L527.0 481.5 L533.9 482.2 L540.9 483.0 L547.8 484.2 L554.8 485.5 L561.7 486.9 L568.6 488.2 L575.6 489.7 L582.5 491.2 L589.4 492.8 L596.4 494.4 L603.3 496.0 L610.2 498.0 L617.2 496.8 L624.1 495.6 L631.1 494.3 L638.0 493.0 L644.9 491.6 L651.9 490.2 L658.8 488.6 L665.8 487.0 L672.7 485.3 L679.6 483.5 L686.6 483.0 L693.5 482.5 L700.4 482.0 L707.4 481.6 L714.3 481.3 L721.2 481.0 L728.2 480.7 L735.1 480.5 L742.1 480.3 L749.0 480.1 L749.0 143.0 Z" fill="#20ffdf"/>
<path d="M194.0 143.0 L194.0 435.1 L200.9 435.2 L207.9 435.3 L214.8 435.3 L221.8 435.4 L228.7 435.5 L235.6 435.6 L242.6 435.7 L249.5 435.9 L256.4 436.0 L263.4 436.2 L270.3 436.3 L277.2 436.4 L284.2 436.5 L291.1 436.6 L298.1 436.7 L305.0 436.8 L311.9 436.9 L318.9 437.0 L325.8 437.1 L332.8 437.1 L339.7 439.0 L346.6 440.8 L353.6 442.6 L360.5 444.3 L367.4 446.3 L374.4 448.3 L381.3 450.1 L388.2 451.8 L395.2 453.3 L402.1 454.8 L409.1 456.5 L416.0 458.3 L422.9 460.0 L429.9 461.6 L436.8 463.2 L443.8 464.8 L450.7 466.3 L457.6 467.5 L464.6 468.6 L471.5 469.7 L478.4 470.2 L485.4 470.7 L492.3 471.2 L499.2 471.7 L506.2 472.2 L513.1 472.7 L520.1 473.2 L527.0 473.7 L533.9 474.2 L540.9 474.7 L547.8 475.5 L554.8 476.4 L561.7 477.3 L568.6 478.4 L575.6 479.6 L582.5 480.7 L589.4 482.1 L596.4 483.5 L603.3 484.9 L610.2 486.5 L617.2 485.1 L624.1 483.6 L631.1 482.1 L638.0 480.5 L644.9 479.0 L651.9 477.4 L658.8 476.3 L665.8 475.2 L672.7 474.2 L679.6 473.2 L686.6 473.1 L693.5 473.0 L700.4 472.9 L707.4 472.8 L714.3 472.6 L721.2 472.5 L728.2 472.4 L735.1 472.2 L742.1 472.1 L749.0 471.9 L749.0 143.0 Z" fill="#30ffcf"/>
<path d="M194.0 143.0 L194.0 428.3 L200.9 428.1 L207.9 428.0 L214.8 427.9 L221.8 427.8 L228.7 427.6 L235.6 427.5 L242.6 427.4 L249.5 427.3 L256.4 427.1 L263.4 427.0 L270.3 427.0 L277.2 426.9 L284.2 426.9 L291.1 426.8 L298.1 426.8 L305.0 426.7 L311.9 426.6 L318.9 426.5 L325.8 426.5 L332.8 426.4 L339.7 428.3 L346.6 430.1 L353.6 431.9 L360.5 433.7 L367.4 435.5 L374.4 437.3 L381.3 439.1 L388.2 440.9 L395.2 442.6 L402.1 444.4 L409.1 446.3 L416.0 448.2 L422.9 450.0 L429.9 451.8 L436.8 453.6 L443.8 455.3 L450.7 456.9 L457.6 458.6 L464.6 460.1 L471.5 461.7 L478.4 462.5 L485.4 463.2 L492.3 463.9 L499.2 464.6 L506.2 465.2 L513.1 465.8 L520.1 466.3 L527.0 466.8 L533.9 467.3 L540.9 467.8 L547.8 468.5 L554.8 469.2 L561.7 469.9 L568.6 470.7 L575.6 471.5 L582.5 472.4 L589.4 473.3 L596.4 474.2 L603.3 475.2 L610.2 476.3 L617.2 475.1 L624.1 473.9 L631.1 472.7 L638.0 471.7 L644.9 470.6 L651.9 469.6 L658.8 468.7 L665.8 467.8 L672.7 466.8 L679.6 465.9 L686.6 465.7 L693.5 465.5 L700.4 465.2 L707.4 464.9 L714.3 464.6 L721.2 464.3 L728.2 464.0 L735.1 463.7 L742.1 463.4 L749.0 463.0 L749.0 143.0 Z" fill="#40ffbf"/>
<path d="M194.0 143.0 L194.0 422.3 L200.9 422.1 L207.9 421.9 L214.8 421.7 L221.8 421.5 L228.7 421.3 L235.6 421.1 L242.6 420.9 L249.5 420.6 L256.4 420.4 L263.4 420.1 L270.3 420.0 L277.2 419.9 L284.2 419.8 L291.1 419.7 L298.1 419.6 L305.0 419.5 L311.9 419.4 L318.9 419.3 L325.8 419.2 L332.8 419.1 L339.7 420.3 L346.6 421.5 L353.6 422.7 L360.5 424.0 L367.4 425.6 L374.4 427.2 L381.3 428.8 L388.2 430.4 L395.2 432.1 L402.1 433.9 L409.1 435.9 L416.0 438.0 L422.9 440.0 L429.9 442.0 L436.8 443.8 L443.8 445.7 L450.7 447.4 L457.6 449.2 L464.6 450.9 L471.5 452.5 L478.4 453.6 L485.4 454.6 L492.3 455.6 L499.2 456.5 L506.2 457.3 L513.1 458.1 L520.1 458.9 L527.0 459.6 L533.9 460.3 L540.9 461.0 L547.8 461.6 L554.8 462.2 L561.7 462.9 L568.6 463.5 L575.6 464.2 L582.5 464.9 L589.4 465.6 L596.4 466.3 L603.3 467.0 L610.2 467.7 L617.2 466.8 L624.1 465.9 L631.1 464.9 L638.0 464.0 L644.9 463.1 L651.9 462.2 L658.8 461.3 L665.8 460.4 L672.7 459.6 L679.6 458.7 L686.6 458.3 L693.5 457.9 L700.4 457.5 L707.4 457.1 L714.3 456.6 L721.2 456.2 L728.2 455.7 L735.1 455.2 L742.1 454.7 L749.0 454.1 L749.0 143.0 Z" fill="#50ffaf"/>
<path d="M194.0 143.0 L194.0 416.5 L200.9 416.2 L207.9 416.0 L214.8 415.7 L221.8 415.4 L228.7 415.0 L235.6 414.7 L242.6 414.4 L249.5 414.0 L256.4 413.6 L263.4 413.3 L270.3 413.2 L277.2 413.1 L284.2 413.1 L291.1 413.0 L298.1 412.9 L305.0 412.9 L311.9 412.8 L318.9 412.7 L325.8 412.7 L332.8 412.6 L339.7 413.6 L346.6 414.7 L353.6 415.8 L360.5 416.9 L367.4 418.1 L374.4 419.3 L381.3 420.7 L388.2 422.0 L395.2 423.5 L402.1 425.0 L409.1 426.5 L416.0 428.0 L422.9 429.6 L429.9 431.5 L436.8 433.6 L443.8 435.6 L450.7 437.6 L457.6 439.6 L464.6 441.6 L471.5 443.4 L478.4 444.7 L485.4 445.9 L492.3 447.1 L499.2 448.2 L506.2 449.3 L513.1 450.3 L520.1 451.3 L527.0 452.3 L533.9 453.2 L540.9 454.1 L547.8 454.6 L554.8 455.2 L561.7 455.8 L568.6 456.4 L575.6 457.0 L582.5 457.6 L589.4 458.2 L596.4 458.9 L603.3 459.5 L610.2 460.2 L617.2 459.3 L624.1 458.4 L631.1 457.5 L638.0 456.6 L644.9 455.7 L651.9 454.9 L658.8 454.0 L665.8 453.2 L672.7 452.4 L679.6 451.6 L686.6 451.1 L693.5 450.7 L700.4 450.2 L707.4 449.7 L714.3 449.3 L721.2 448.8 L728.2 448.4 L735.1 448.0 L742.1 447.6 L749.0 447.2 L749.0 143.0 Z" fill="#60ff9f"/>
<path d="M194.0 143.0 L194.0 410.7 L200.9 410.4 L207.9 410.0 L214.8 409.6 L221.8 409.2 L228.7 408.8 L235.6 408.3 L242.6 407.9 L249.5 407.4 L256.4 406.9 L263.4 406.4 L270.3 406.4 L277.2 406.3 L284.2 406.3 L291.1 406.3 L298.1 406.2 L305.0 406.2 L311.9 406.2 L318.9 406.1 L325.8 406.1 L332.8 406.1 L339.7 406.9 L346.6 407.8 L353.6 408.8 L360.5 409.8 L367.4 410.8 L374.4 411.9 L381.3 413.0 L388.2 414.2 L395.2 415.5 L402.1 416.8 L409.1 418.1 L416.0 419.5 L422.9 420.9 L429.9 422.4 L436.8 424.0 L443.8 425.6 L450.7 427.4 L457.6 429.2 L464.6 431.2 L471.5 433.2 L478.4 435.0 L485.4 436.7 L492.3 438.3 L499.2 439.7 L506.2 441.0 L513.1 442.3 L520.1 443.4 L527.0 444.5 L533.9 445.6 L540.9 446.6 L547.8 447.2 L554.8 447.8 L561.7 448.4 L568.6 449.0 L575.6 449.6 L582.5 450.2 L589.4 450.8 L596.4 451.4 L603.3 452.0 L610.2 452.7 L617.2 451.8 L624.1 451.0 L631.1 450.2 L638.0 449.4 L644.9 448.6 L651.9 447.8 L658.8 447.1 L665.8 446.4 L672.7 445.6 L679.6 444.9 L686.6 444.5 L693.5 444.1 L700.4 443.8 L707.4 443.4 L714.3 443.0 L721.2 442.7 L728.2 442.3 L735.1 442.0 L742.1 441.6 L749.0 441.3 L749.0 143.0 Z" fill="#70ff8f"/>
<path d="M194.0 143.0 L194.0 404.6 L200.9 404.1 L207.9 403.5 L214.8 403.0 L221.8 402.5 L228.7 402.0 L235.6 401.5 L242.6 401.0 L249.5 400.5 L256.4 400.0 L263.4 399.5 L270.3 399.5 L277.2 399.5 L284.2 399.5 L291.1 399.5 L298.1 399.5 L305.0 399.5 L311.9 399.5 L318.9 399.5 L325.8 399.5 L332.8 399.5 L339.7 400.2 L346.6 401.0 L353.6 401.8 L360.5 402.7 L367.4 403.6 L374.4 404.5 L381.3 405.4 L388.2 406.4 L395.2 407.5 L402.1 408.6 L409.1 409.7 L416.0 410.9 L422.9 412.1 L429.9 413.4 L436.8 414.8 L443.8 416.2 L450.7 417.7 L457.6 419.2 L464.6 420.9 L471.5 422.7 L478.4 424.7 L485.4 426.8 L492.3 428.8 L499.2 430.7 L506.2 432.3 L513.1 433.9 L520.1 435.3 L527.0 436.7 L533.9 438.0 L540.9 439.2 L547.8 439.8 L554.8 440.3 L561.7 440.9 L568.6 441.5 L575.6 442.1 L582.5 442.7 L589.4 443.3 L596.4 443.9 L603.3 444.5 L610.2 445.1 L617.2 444.4 L624.1 443.6 L631.1 442.9 L638.0 442.2 L644.9 441.5 L651.9 440.8 L658.8 440.2 L665.8 439.5 L672.7 438.9 L679.6 438.3 L686.6 437.9 L693.5 437.6 L700.4 437.3 L707.4 437.0 L714.3 436.7 L721.2 436.5 L728.2 436.2 L735.1 435.9 L742.1 435.7 L749.0 435.4 L749.0 143.0 Z" fill="#80ff80"/>
<path d="M194.0 143.0 L194.0 397.7 L200.9 397.2 L207.9 396.7 L214.8 396.2 L221.8 395.7 L228.7 395.2 L235.6 394.7 L242.6 394.2 L249.5 393.7 L256.4 393.2 L263.4 392.7 L270.3 392.6 L277.2 392.6 L284.2 392.5 L291.1 392.5 L298.1 392.4 L305.0 392.4 L311.9 392.3 L318.9 392.3 L325.8 392.2 L332.8 392.2 L339.7 392.9 L346.6 393.6 L353.6 394.4 L360.5 395.2 L367.4 396.0 L374.4 396.8 L381.3 397.7 L388.2 398.6 L395.2 399.5 L402.1 400.4 L409.1 401.4 L416.0 402.5 L422.9 403.6 L429.9 404.7 L436.8 405.8 L443.8 407.0 L450.7 408.2 L457.6 409.5 L464.6 410.8 L471.5 412.1 L478.4 414.3 L485.4 416.4 L492.3 418.5 L499.2 420.6 L506.2 422.6 L513.1 424.6 L520.1 426.5 L527.0 428.4 L533.9 430.3 L540.9 431.7 L547.8 432.3 L554.8 432.9 L561.7 433.5 L568.6 434.0 L575.6 434.6 L582.5 435.2 L589.4 435.8 L596.4 436.4 L603.3 437.0 L610.2 437.6 L617.2 436.9 L624.1 436.3 L631.1 435.6 L638.0 435.0 L644.9 434.4 L651.9 433.8 L658.8 433.2 L665.8 432.7 L672.7 432.1 L679.6 431.6 L686.6 431.3 L693.5 431.1 L700.4 430.9 L707.4 430.7 L714.3 430.5 L721.2 430.3 L728.2 430.1 L735.1 429.9 L742.1 429.7 L749.0 429.5 L749.0 143.0 Z" fill="#8fff70"/>
<path d="M194.0 143.0 L194.0 390.8 L200.9 390.3 L207.9 389.8 L214.8 389.3 L221.8 388.8 L228.7 388.3 L235.6 387.8 L242.6 387.3 L249.5 386.8 L256.4 386.3 L263.4 385.8 L270.3 385.7 L277.2 385.6 L284.2 385.5 L291.1 385.4 L298.1 385.3 L305.0 385.2 L311.9 385.1 L318.9 385.0 L325.8 384.9 L332.8 384.7 L339.7 385.3 L346.6 385.9 L353.6 386.5 L360.5 387.2 L367.4 387.9 L374.4 388.6 L381.3 389.3 L388.2 390.0 L395.2 390.8 L402.1 391.6 L409.1 392.6 L416.0 393.7 L422.9 394.7 L429.9 395.8 L436.8 396.9 L443.8 398.0 L450.7 399.1 L457.6 400.2 L464.6 401.3 L471.5 402.5 L478.4 404.5 L485.4 406.5 L492.3 408.6 L499.2 410.6 L506.2 412.6 L513.1 414.7 L520.1 416.7 L527.0 418.7 L533.9 420.6 L540.9 422.5 L547.8 423.3 L554.8 424.2 L561.7 425.0 L568.6 425.9 L575.6 426.7 L582.5 427.5 L589.4 428.2 L596.4 428.8 L603.3 429.5 L610.2 430.1 L617.2 429.5 L624.1 428.9 L631.1 428.3 L638.0 427.7 L644.9 427.2 L651.9 426.6 L658.8 426.0 L665.8 425.4 L672.7 424.9 L679.6 424.4 L686.6 424.2 L693.5 424.0 L700.4 423.8 L707.4 423.7 L714.3 423.5 L721.2 423.3 L728.2 423.2 L735.1 423.0 L742.1 422.8 L749.0 422.6 L749.0 143.0 Z" fill="#9fff60"/>
<path d="M194.0 143.0 L194.0 383.9 L200.9 383.4 L207.9 382.9 L214.8 382.4 L221.8 381.9 L228.7 381.4 L235.6 380.9 L242.6 380.4 L249.5 379.8 L256.4 379.0 L263.4 378.2 L270.3 377.8 L277.2 377.4 L284.2 377.1 L291.1 376.7 L298.1 376.3 L305.0 375.9 L311.9 375.5 L318.9 375.1 L325.8 374.6 L332.8 374.2 L339.7 375.1 L346.6 376.1 L353.6 377.0 L360.5 378.0 L367.4 378.9 L374.4 379.9 L381.3 380.7 L388.2 381.4 L395.2 382.0 L402.1 382.7 L409.1 383.6 L416.0 384.6 L422.9 385.6 L429.9 386.6 L436.8 387.6 L443.8 388.6 L450.7 389.7 L457.6 390.7 L464.6 391.8 L471.5 392.9 L478.4 394.9 L485.4 396.9 L492.3 399.0 L499.2 401.0 L506.2 403.0 L513.1 405.0 L520.1 407.0 L527.0 409.0 L533.9 411.0 L540.9 413.0 L547.8 413.7 L554.8 414.3 L561.7 415.0 L568.6 415.7 L575.6 416.5 L582.5 417.3 L589.4 418.0 L596.4 418.9 L603.3 419.7 L610.2 420.6 L617.2 420.1 L624.1 419.6 L631.1 419.2 L638.0 418.8 L644.9 418.4 L651.9 418.1 L658.8 417.8 L665.8 417.6 L672.7 417.3 L679.6 417.1 L686.6 416.9 L693.5 416.7 L700.4 416.6 L707.4 416.4 L714.3 416.3 L721.2 416.1 L728.2 416.0 L735.1 415.8 L742.1 415.7 L749.0 415.5 L749.0 143.0 Z" fill="#afff50"/>
<path d="M194.0 143.0 L194.0 375.8 L200.9 375.1 L207.9 374.3 L214.8 373.4 L221.8 372.6 L228.7 371.7 L235.6 370.8 L242.6 369.9 L249.5 369.0 L256.4 368.0 L263.4 367.0 L270.3 366.5 L277.2 366.0 L284.2 365.5 L291.1 365.0 L298.1 364.5 L305.0 364.0 L311.9 363.5 L318.9 363.0 L325.8 362.5 L332.8 362.0 L339.7 362.9 L346.6 363.8 L353.6 364.6 L360.5 365.5 L367.4 366.4 L374.4 367.3 L381.3 368.2 L388.2 369.2 L395.2 370.1 L402.1 371.0 L409.1 372.7 L416.0 374.2 L422.9 375.6 L429.9 376.9 L436.8 378.2 L443.8 379.4 L450.7 380.4 L457.6 381.4 L464.6 382.4 L471.5 383.5 L478.4 385.2 L485.4 387.0 L492.3 388.9 L499.2 390.9 L506.2 392.9 L513.1 395.0 L520.1 397.2 L527.0 399.5 L533.9 401.5 L540.9 403.5 L547.8 404.0 L554.8 404.5 L561.7 405.1 L568.6 405.6 L575.6 406.2 L582.5 406.8 L589.4 407.4 L596.4 408.0 L603.3 408.7 L610.2 409.4 L617.2 409.4 L624.1 409.5 L631.1 409.5 L638.0 409.6 L644.9 409.6 L651.9 409.6 L658.8 409.7 L665.8 409.7 L672.7 409.7 L679.6 409.8 L686.6 409.6 L693.5 409.5 L700.4 409.3 L707.4 409.2 L714.3 409.1 L721.2 408.9 L728.2 408.8 L735.1 408.7 L742.1 408.5 L749.0 408.4 L749.0 143.0 Z" fill="#bfff40"/>
<path d="M194.0 143.0 L194.0 366.2 L200.9 365.3 L207.9 364.3 L214.8 363.3 L221.8 362.4 L228.7 361.3 L235.6 360.2 L242.6 358.8 L249.5 357.7 L256.4 356.6 L263.4 355.7 L270.3 355.2 L277.2 354.7 L284.2 354.2 L291.1 353.6 L298.1 353.1 L305.0 352.6 L311.9 352.0 L318.9 351.5 L325.8 350.9 L332.8 350.3 L339.7 351.6 L346.6 352.8 L353.6 353.9 L360.5 355.0 L367.4 356.0 L374.4 356.9 L381.3 357.8 L388.2 358.7 L395.2 359.5 L402.1 360.3 L409.1 361.6 L416.0 363.0 L422.9 364.3 L429.9 365.8 L436.8 367.4 L443.8 368.9 L450.7 370.3 L457.6 371.6 L464.6 372.9 L471.5 374.1 L478.4 375.7 L485.4 377.3 L492.3 379.0 L499.2 380.7 L506.2 382.6 L513.1 384.5 L520.1 386.4 L527.0 388.5 L533.9 390.7 L540.9 392.9 L547.8 393.5 L554.8 394.0 L561.7 394.5 L568.6 395.1 L575.6 395.6 L582.5 396.1 L589.4 396.7 L596.4 397.2 L603.3 397.7 L610.2 398.2 L617.2 398.8 L624.1 399.4 L631.1 399.9 L638.0 400.3 L644.9 400.8 L651.9 401.2 L658.8 401.5 L665.8 401.9 L672.7 402.2 L679.6 402.4 L686.6 402.3 L693.5 402.2 L700.4 402.1 L707.4 402.0 L714.3 401.9 L721.2 401.7 L728.2 401.6 L735.1 401.5 L742.1 401.4 L749.0 401.3 L749.0 143.0 Z" fill="#cfff30"/>
<path d="M194.0 143.0 L194.0 349.8 L200.9 348.7 L207.9 347.7 L214.8 346.8 L221.8 345.9 L228.7 345.2 L235.6 344.4 L242.6 343.7 L249.5 343.1 L256.4 342.5 L263.4 342.0 L270.3 341.5 L277.2 341.1 L284.2 340.7 L291.1 340.4 L298.1 340.1 L305.0 339.8 L311.9 339.5 L318.9 339.3 L325.8 339.0 L332.8 338.8 L339.7 340.3 L346.6 341.8 L353.6 343.2 L360.5 344.5 L367.4 345.8 L374.4 347.0 L381.3 348.2 L388.2 349.3 L395.2 350.3 L402.1 351.3 L409.1 352.6 L416.0 353.9 L422.9 355.2 L429.9 356.5 L436.8 357.8 L443.8 359.2 L450.7 360.6 L457.6 362.0 L464.6 363.3 L471.5 364.7 L478.4 366.1 L485.4 367.6 L492.3 369.1 L499.2 370.7 L506.2 372.3 L513.1 374.0 L520.1 375.7 L527.0 377.6 L533.9 379.5 L540.9 381.5 L547.8 382.0 L554.8 382.6 L561.7 383.2 L568.6 383.7 L575.6 384.3 L582.5 384.8 L589.4 385.4 L596.4 385.9 L603.3 386.5 L610.2 387.0 L617.2 387.8 L624.1 388.5 L631.1 389.3 L638.0 390.0 L644.9 390.7 L651.9 391.3 L658.8 392.0 L665.8 392.6 L672.7 393.2 L679.6 393.8 L686.6 393.9 L693.5 393.9 L700.4 394.0 L707.4 394.0 L714.3 394.0 L721.2 394.0 L728.2 394.1 L735.1 394.1 L742.1 394.1 L749.0 394.1 L749.0 143.0 Z" fill="#dfff20"/>
<path d="M194.0 143.0 L194.0 324.9 L200.9 324.9 L207.9 324.9 L214.8 324.9 L221.8 324.9 L228.7 324.9 L235.6 324.9 L242.6 324.8 L249.5 324.8 L256.4 324.8 L263.4 324.8 L270.3 325.2 L277.2 325.5 L284.2 325.9 L291.1 326.1 L298.1 326.4 L305.0 326.7 L311.9 326.9 L318.9 327.1 L325.8 327.3 L332.8 327.5 L339.7 328.8 L346.6 330.1 L353.6 331.5 L360.5 333.0 L367.4 334.4 L374.4 336.0 L381.3 337.6 L388.2 339.3 L395.2 341.1 L402.1 342.3 L409.1 343.5 L416.0 344.8 L422.9 346.0 L429.9 347.3 L436.8 348.6 L443.8 349.9 L450.7 351.2 L457.6 352.5 L464.6 353.9 L471.5 355.2 L478.4 356.5 L485.4 357.8 L492.3 359.2 L499.2 360.6 L506.2 362.0 L513.1 363.5 L520.1 365.1 L527.0 366.7 L533.9 368.4 L540.9 370.1 L547.8 370.8 L554.8 371.5 L561.7 372.1 L568.6 372.7 L575.6 373.2 L582.5 373.7 L589.4 374.2 L596.4 374.7 L603.3 375.3 L610.2 375.9 L617.2 376.7 L624.1 377.5 L631.1 378.4 L638.0 379.3 L644.9 380.2 L651.9 381.0 L658.8 381.8 L665.8 382.6 L672.7 383.3 L679.6 384.0 L686.6 384.1 L693.5 384.2 L700.4 384.3 L707.4 384.4 L714.3 384.5 L721.2 384.6 L728.2 384.7 L735.1 384.8 L742.1 384.9 L749.0 384.9 L749.0 143.0 Z" fill="#efff10"/>
<path d="M194.0 143.0 L194.0 304.9 L200.9 305.4 L207.9 306.0 L214.8 306.5 L221.8 307.0 L228.7 307.4 L235.6 307.8 L242.6 308.2 L249.5 308.5 L256.4 308.9 L263.4 309.2 L270.3 309.8 L277.2 310.4 L284.2 311.0 L291.1 311.6 L298.1 312.2 L305.0 312.8 L311.9 313.3 L318.9 313.9 L325.8 314.4 L332.8 314.9 L339.7 316.3 L346.6 317.7 L353.6 319.1 L360.5 320.5 L367.4 321.9 L374.4 323.3 L381.3 324.7 L388.2 326.1 L395.2 327.6 L402.1 329.2 L409.1 331.9 L416.0 334.0 L422.9 335.6 L429.9 337.2 L436.8 338.9 L443.8 340.5 L450.7 341.8 L457.6 343.1 L464.6 344.4 L471.5 345.7 L478.4 346.9 L485.4 348.0 L492.3 349.2 L499.2 350.4 L506.2 351.7 L513.1 353.0 L520.1 354.4 L527.0 355.8 L533.9 357.3 L540.9 358.8 L547.8 360.0 L554.8 361.0 L561.7 362.0 L568.6 363.0 L575.6 363.8 L582.5 364.6 L589.4 365.4 L596.4 366.1 L603.3 366.8 L610.2 367.4 L617.2 367.8 L624.1 368.1 L631.1 368.5 L638.0 369.0 L644.9 369.4 L651.9 369.9 L658.8 370.5 L665.8 371.1 L672.7 371.8 L679.6 372.6 L686.6 372.9 L693.5 373.2 L700.4 373.6 L707.4 373.9 L714.3 374.2 L721.2 374.4 L728.2 374.7 L735.1 375.0 L742.1 375.2 L749.0 375.5 L749.0 143.0 Z" fill="#ffff00"/>
<path d="M194.0 143.0 L194.0 285.9 L200.9 287.4 L207.9 288.6 L214.8 289.7 L221.8 290.7 L228.7 291.6 L235.6 292.3 L242.6 293.0 L249.5 293.6 L256.4 294.2 L263.4 294.7 L270.3 296.0 L277.2 297.1 L284.2 298.0 L291.1 298.8 L298.1 299.4 L305.0 300.0 L311.9 300.5 L318.9 300.9 L325.8 301.3 L332.8 301.6 L339.7 304.4 L346.6 306.6 L353.6 308.4 L360.5 309.9 L367.4 311.2 L374.4 312.3 L381.3 313.2 L388.2 314.0 L395.2 314.8 L402.1 315.5 L409.1 319.3 L416.0 322.7 L422.9 325.8 L429.9 328.4 L436.8 330.2 L443.8 331.8 L450.7 333.1 L457.6 334.3 L464.6 335.3 L471.5 336.2 L478.4 337.8 L485.4 339.3 L492.3 340.7 L499.2 341.9 L506.2 343.1 L513.1 344.1 L520.1 345.0 L527.0 345.9 L533.9 346.7 L540.9 347.5 L547.8 349.5 L554.8 351.2 L561.7 352.7 L568.6 354.0 L575.6 355.2 L582.5 356.2 L589.4 357.1 L596.4 357.9 L603.3 358.7 L610.2 359.4 L617.2 359.4 L624.1 359.5 L631.1 359.5 L638.0 359.6 L644.9 359.6 L651.9 359.7 L658.8 359.8 L665.8 359.8 L672.7 359.9 L679.6 360.0 L686.6 360.5 L693.5 361.1 L700.4 361.6 L707.4 362.1 L714.3 362.6 L721.2 363.1 L728.2 363.6 L735.1 364.1 L742.1 364.6 L749.0 365.0 L749.0 143.0 Z" fill="#ffef00"/>
<path d="M194.0 143.0 L194.0 272.7 L200.9 274.1 L207.9 275.5 L214.8 276.8 L221.8 278.0 L228.7 279.2 L235.6 280.3 L242.6 281.4 L249.5 282.4 L256.4 283.4 L263.4 284.3 L270.3 285.9 L277.2 287.3 L284.2 288.6 L291.1 289.8 L298.1 290.8 L305.0 291.8 L311.9 292.7 L318.9 293.5 L325.8 294.3 L332.8 295.0 L339.7 296.4 L346.6 297.8 L353.6 299.3 L360.5 301.0 L367.4 303.0 L374.4 304.7 L381.3 306.1 L388.2 307.4 L395.2 308.5 L402.1 309.5 L409.1 311.1 L416.0 312.8 L422.9 314.7 L429.9 317.4 L436.8 320.5 L443.8 323.3 L450.7 326.0 L457.6 328.0 L464.6 329.4 L471.5 330.6 L478.4 331.6 L485.4 332.6 L492.3 333.6 L499.2 334.7 L506.2 335.7 L513.1 337.0 L520.1 338.2 L527.0 339.4 L533.9 340.4 L540.9 341.4 L547.8 342.5 L554.8 343.7 L561.7 344.9 L568.6 346.0 L575.6 347.2 L582.5 348.6 L589.4 349.9 L596.4 351.1 L603.3 352.2 L610.2 353.2 L617.2 352.9 L624.1 352.6 L631.1 352.3 L638.0 352.0 L644.9 351.6 L651.9 351.2 L658.8 350.7 L665.8 350.2 L672.7 349.6 L679.6 349.0 L686.6 349.3 L693.5 349.7 L700.4 350.2 L707.4 350.6 L714.3 351.0 L721.2 351.5 L728.2 351.9 L735.1 352.4 L742.1 352.8 L749.0 353.3 L749.0 143.0 Z" fill="#ffdf00"/>
<path d="M194.0 143.0 L194.0 263.1 L200.9 264.0 L207.9 264.9 L214.8 265.9 L221.8 266.9 L228.7 268.0 L235.6 269.1 L242.6 270.2 L249.5 271.4 L256.4 272.7 L263.4 273.9 L270.3 276.0 L277.2 278.0 L284.2 279.7 L291.1 281.3 L298.1 282.8 L305.0 284.1 L311.9 285.3 L318.9 286.4 L325.8 287.4 L332.8 288.4 L339.7 289.5 L346.6 290.8 L353.6 292.1 L360.5 293.4 L367.4 295.0 L374.4 296.6 L381.3 298.3 L388.2 300.2 L395.2 302.3 L402.1 303.6 L409.1 305.0 L416.0 306.5 L422.9 308.1 L429.9 309.8 L436.8 311.7 L443.8 313.7 L450.7 316.0 L457.6 318.8 L464.6 321.4 L471.5 323.8 L478.4 325.4 L485.4 326.9 L492.3 328.0 L499.2 329.0 L506.2 330.0 L513.1 331.0 L520.1 332.0 L527.0 333.1 L533.9 334.2 L540.9 335.3 L547.8 336.4 L554.8 337.6 L561.7 338.7 L568.6 339.9 L575.6 341.1 L582.5 342.2 L589.4 343.4 L596.4 344.6 L603.3 345.8 L610.2 346.9 L617.2 346.5 L624.1 346.0 L631.1 345.4 L638.0 344.9 L644.9 344.3 L651.9 343.7 L658.8 343.0 L665.8 342.3 L672.7 341.6 L679.6 340.8 L686.6 340.9 L693.5 340.9 L700.4 341.0 L707.4 341.1 L714.3 341.1 L721.2 341.2 L728.2 341.3 L735.1 341.4 L742.1 341.5 L749.0 341.6 L749.0 143.0 Z" fill="#ffcf00"/>
<path d="M194.0 143.0 L194.0 254.0 L200.9 254.8 L207.9 255.5 L214.8 256.4 L221.8 257.2 L228.7 258.1 L235.6 259.0 L242.6 259.9 L249.5 260.9 L256.4 261.9 L263.4 263.0 L270.3 265.4 L277.2 267.6 L284.2 269.8 L291.1 271.9 L298.1 274.0 L305.0 275.9 L311.9 277.8 L318.9 279.3 L325.8 280.6 L332.8 281.8 L339.7 282.7 L346.6 283.7 L353.6 284.8 L360.5 285.9 L367.4 287.1 L374.4 288.4 L381.3 289.8 L388.2 291.4 L395.2 293.0 L402.1 294.9 L409.1 297.0 L416.0 299.1 L422.9 301.2 L429.9 303.0 L436.8 304.6 L443.8 306.3 L450.7 308.2 L457.6 310.2 L464.6 312.5 L471.5 314.9 L478.4 316.3 L485.4 317.7 L492.3 319.2 L499.2 320.8 L506.2 322.4 L513.1 324.1 L520.1 325.9 L527.0 327.2 L533.9 328.2 L540.9 329.2 L547.8 330.3 L554.8 331.4 L561.7 332.6 L568.6 333.8 L575.6 334.9 L582.5 336.1 L589.4 337.2 L596.4 338.4 L603.3 339.5 L610.2 340.7 L617.2 340.1 L624.1 339.4 L631.1 338.7 L638.0 338.0 L644.9 337.2 L651.9 336.4 L658.8 335.5 L665.8 334.6 L672.7 333.6 L679.6 332.6 L686.6 332.4 L693.5 332.2 L700.4 332.0 L707.4 331.8 L714.3 331.6 L721.2 331.3 L728.2 331.1 L735.1 330.8 L742.1 330.5 L749.0 330.2 L749.0 143.0 Z" fill="#ffbf00"/>
<path d="M194.0 143.0 L194.0 243.9 L200.9 244.7 L207.9 245.4 L214.8 246.2 L221.8 247.0 L228.7 247.8 L235.6 248.6 L242.6 249.5 L249.5 250.3 L256.4 251.1 L263.4 252.0 L270.3 254.5 L277.2 257.0 L284.2 259.6 L291.1 261.9 L298.1 264.1 L305.0 266.3 L311.9 268.3 L318.9 270.3 L325.8 272.2 L332.8 274.1 L339.7 275.0 L346.6 276.0 L353.6 277.1 L360.5 278.3 L367.4 279.3 L374.4 280.3 L381.3 281.4 L388.2 282.5 L395.2 283.8 L402.1 285.2 L409.1 287.3 L416.0 289.5 L422.9 291.6 L429.9 293.7 L436.8 295.8 L443.8 297.9 L450.7 300.1 L457.6 302.2 L464.6 304.0 L471.5 306.1 L478.4 307.2 L485.4 308.5 L492.3 309.7 L499.2 311.1 L506.2 312.5 L513.1 313.9 L520.1 315.5 L527.0 317.1 L533.9 318.8 L540.9 320.6 L547.8 322.3 L554.8 323.9 L561.7 325.5 L568.6 326.8 L575.6 327.9 L582.5 329.1 L589.4 330.5 L596.4 332.1 L603.3 333.3 L610.2 334.5 L617.2 333.7 L624.1 332.9 L631.1 331.9 L638.0 330.7 L644.9 329.5 L651.9 328.4 L658.8 327.3 L665.8 326.3 L672.7 324.9 L679.6 323.4 L686.6 322.9 L693.5 322.4 L700.4 321.9 L707.4 321.4 L714.3 320.9 L721.2 320.4 L728.2 320.0 L735.1 319.6 L742.1 319.1 L749.0 318.7 L749.0 143.0 Z" fill="#ffaf00"/>
<path d="M194.0 143.0 L194.0 233.6 L200.9 234.3 L207.9 235.0 L214.8 235.7 L221.8 236.4 L228.7 237.2 L235.6 237.9 L242.6 238.7 L249.5 239.4 L256.4 240.2 L263.4 241.0 L270.3 243.4 L277.2 245.8 L284.2 248.2 L291.1 250.7 L298.1 253.3 L305.0 256.0 L311.9 258.7 L318.9 261.0 L325.8 263.1 L332.8 265.1 L339.7 265.7 L346.6 266.3 L353.6 266.9 L360.5 267.6 L367.4 268.4 L374.4 269.3 L381.3 270.3 L388.2 271.4 L395.2 272.6 L402.1 274.0 L409.1 277.3 L416.0 279.8 L422.9 281.9 L429.9 284.0 L436.8 286.2 L443.8 288.3 L450.7 290.4 L457.6 292.5 L464.6 294.6 L471.5 296.8 L478.4 297.9 L485.4 299.0 L492.3 300.1 L499.2 301.3 L506.2 302.5 L513.1 303.7 L520.1 305.0 L527.0 306.4 L533.9 307.8 L540.9 309.3 L547.8 311.1 L554.8 312.8 L561.7 314.5 L568.6 316.2 L575.6 317.8 L582.5 319.4 L589.4 321.0 L596.4 322.5 L603.3 324.1 L610.2 325.6 L617.2 324.3 L624.1 323.0 L631.1 321.7 L638.0 320.3 L644.9 318.8 L651.9 317.3 L658.8 315.7 L665.8 314.0 L672.7 312.2 L679.6 310.4 L686.6 310.0 L693.5 309.7 L700.4 309.4 L707.4 309.0 L714.3 308.7 L721.2 308.4 L728.2 308.1 L735.1 307.9 L742.1 307.6 L749.0 307.3 L749.0 143.0 Z" fill="#ff9f00"/>
<path d="M194.0 143.0 L194.0 222.7 L200.9 223.5 L207.9 224.2 L214.8 225.0 L221.8 225.7 L228.7 226.4 L235.6 227.2 L242.6 227.9 L249.5 228.6 L256.4 229.3 L263.4 230.0 L270.3 232.2 L277.2 234.5 L284.2 236.8 L291.1 239.2 L298.1 241.7 L305.0 244.2 L311.9 246.7 L318.9 249.4 L325.8 252.1 L332.8 254.8 L339.7 255.4 L346.6 256.0 L353.6 256.5 L360.5 257.0 L367.4 257.6 L374.4 258.1 L381.3 258.6 L388.2 259.1 L395.2 259.6 L402.1 260.1 L409.1 263.0 L416.0 266.6 L422.9 269.9 L429.9 273.0 L436.8 276.0 L443.8 278.6 L450.7 280.7 L457.6 282.8 L464.6 285.0 L471.5 287.1 L478.4 288.1 L485.4 289.1 L492.3 290.1 L499.2 291.2 L506.2 292.3 L513.1 293.4 L520.1 294.5 L527.0 295.7 L533.9 296.9 L540.9 298.1 L547.8 299.9 L554.8 301.7 L561.7 303.4 L568.6 305.2 L575.6 306.9 L582.5 308.7 L589.4 310.3 L596.4 312.0 L603.3 313.6 L610.2 315.2 L617.2 313.7 L624.1 312.2 L631.1 310.6 L638.0 309.0 L644.9 307.3 L651.9 305.5 L658.8 303.6 L665.8 301.8 L672.7 300.4 L679.6 299.1 L686.6 298.8 L693.5 298.6 L700.4 298.3 L707.4 298.0 L714.3 297.7 L721.2 297.4 L728.2 297.1 L735.1 296.7 L742.1 296.3 L749.0 295.9 L749.0 143.0 Z" fill="#ff8f00"/>
<path d="M194.0 143.0 L194.0 211.2 L200.9 212.0 L207.9 212.8 L214.8 213.6 L221.8 214.4 L228.7 215.2 L235.6 215.9 L242.6 216.7 L249.5 217.5 L256.4 218.2 L263.4 219.0 L270.3 221.2 L277.2 223.3 L284.2 225.5 L291.1 227.7 L298.1 230.0 L305.0 232.4 L311.9 234.8 L318.9 237.3 L325.8 239.8 L332.8 242.4 L339.7 243.1 L346.6 243.8 L353.6 244.5 L360.5 245.1 L367.4 245.7 L374.4 246.4 L381.3 247.0 L388.2 247.6 L395.2 248.2 L402.1 248.7 L409.1 251.8 L416.0 254.8 L422.9 257.7 L429.9 260.6 L436.8 263.5 L443.8 266.7 L450.7 269.6 L457.6 272.3 L464.6 274.9 L471.5 277.3 L478.4 278.3 L485.4 279.2 L492.3 280.1 L499.2 281.1 L506.2 282.0 L513.1 283.0 L520.1 284.1 L527.0 285.1 L533.9 286.2 L540.9 287.3 L547.8 289.1 L554.8 290.9 L561.7 292.7 L568.6 294.5 L575.6 296.2 L582.5 298.0 L589.4 299.7 L596.4 301.4 L603.3 303.1 L610.2 304.8 L617.2 303.1 L624.1 301.5 L631.1 299.9 L638.0 298.4 L644.9 297.0 L651.9 295.6 L658.8 294.3 L665.8 293.0 L672.7 291.8 L679.6 290.6 L686.6 290.2 L693.5 289.7 L700.4 289.2 L707.4 288.6 L714.3 288.0 L721.2 287.4 L728.2 286.8 L735.1 286.1 L742.1 285.3 L749.0 284.5 L749.0 143.0 Z" fill="#ff8000"/>
<path d="M194.0 143.0 L194.0 200.1 L200.9 200.8 L207.9 201.6 L214.8 202.3 L221.8 203.1 L228.7 203.9 L235.6 204.7 L242.6 205.5 L249.5 206.3 L256.4 207.1 L263.4 207.9 L270.3 210.2 L277.2 212.5 L284.2 214.7 L291.1 216.8 L298.1 219.0 L305.0 221.0 L311.9 223.1 L318.9 225.2 L325.8 227.6 L332.8 230.0 L339.7 230.8 L346.6 231.6 L353.6 232.4 L360.5 233.2 L367.4 233.9 L374.4 234.6 L381.3 235.4 L388.2 236.1 L395.2 236.8 L402.1 237.4 L409.1 240.7 L416.0 243.8 L422.9 246.8 L429.9 249.8 L436.8 252.7 L443.8 255.5 L450.7 258.4 L457.6 261.2 L464.6 264.0 L471.5 266.7 L478.4 267.7 L485.4 268.6 L492.3 269.6 L499.2 270.5 L506.2 271.5 L513.1 272.4 L520.1 273.4 L527.0 274.4 L533.9 275.4 L540.9 276.4 L547.8 278.1 L554.8 279.9 L561.7 281.7 L568.6 283.6 L575.6 285.5 L582.5 287.4 L589.4 289.2 L596.4 290.9 L603.3 292.7 L610.2 294.4 L617.2 293.0 L624.1 291.5 L631.1 290.2 L638.0 288.9 L644.9 287.7 L651.9 286.4 L658.8 285.3 L665.8 284.2 L672.7 283.2 L679.6 282.2 L686.6 281.5 L693.5 280.8 L700.4 280.0 L707.4 279.2 L714.3 278.4 L721.2 277.4 L728.2 276.4 L735.1 275.5 L742.1 274.4 L749.0 273.4 L749.0 143.0 Z" fill="#ff7000"/>
<path d="M194.0 143.0 L194.0 189.7 L200.9 190.3 L207.9 190.9 L214.8 191.5 L221.8 192.1 L228.7 192.8 L235.6 193.4 L242.6 194.1 L249.5 194.8 L256.4 195.5 L263.4 196.3 L270.3 198.8 L277.2 201.3 L284.2 203.8 L291.1 206.3 L298.1 208.5 L305.0 210.7 L311.9 212.8 L318.9 214.9 L325.8 216.9 L332.8 218.9 L339.7 219.5 L346.6 220.1 L353.6 220.7 L360.5 221.3 L367.4 222.0 L374.4 222.7 L381.3 223.4 L388.2 224.2 L395.2 225.0 L402.1 225.9 L409.1 229.2 L416.0 232.5 L422.9 236.0 L429.9 239.1 L436.8 242.2 L443.8 245.1 L450.7 248.0 L457.6 250.7 L464.6 253.4 L471.5 256.2 L478.4 256.9 L485.4 257.7 L492.3 258.5 L499.2 259.4 L506.2 260.3 L513.1 261.3 L520.1 262.4 L527.0 263.5 L533.9 264.4 L540.9 265.4 L547.8 267.1 L554.8 268.8 L561.7 270.5 L568.6 272.3 L575.6 274.1 L582.5 275.9 L589.4 277.8 L596.4 279.7 L603.3 281.6 L610.2 283.5 L617.2 282.2 L624.1 281.0 L631.1 279.9 L638.0 278.8 L644.9 277.8 L651.9 276.8 L658.8 275.8 L665.8 274.9 L672.7 274.0 L679.6 273.1 L686.6 272.1 L693.5 271.2 L700.4 270.2 L707.4 269.2 L714.3 268.1 L721.2 267.0 L728.2 266.0 L735.1 264.8 L742.1 263.7 L749.0 262.5 L749.0 143.0 Z" fill="#ff6000"/>
<path d="M194.0 143.0 L194.0 179.4 L200.9 179.8 L207.9 180.3 L214.8 180.7 L221.8 181.1 L228.7 181.7 L235.6 182.2 L242.6 182.7 L249.5 183.3 L256.4 183.8 L263.4 184.4 L270.3 186.9 L277.2 189.4 L284.2 192.0 L291.1 194.5 L298.1 197.0 L305.0 199.5 L311.9 202.0 L318.9 204.5 L325.8 206.9 L332.8 209.0 L339.7 209.3 L346.6 209.7 L353.6 210.0 L360.5 210.4 L367.4 210.8 L374.4 211.2 L381.3 211.7 L388.2 212.2 L395.2 212.6 L402.1 213.2 L409.1 216.4 L416.0 219.8 L422.9 223.3 L429.9 226.9 L436.8 230.5 L443.8 234.3 L450.7 237.7 L457.6 240.7 L464.6 243.5 L471.5 246.3 L478.4 246.6 L485.4 247.0 L492.3 247.4 L499.2 247.8 L506.2 248.3 L513.1 248.8 L520.1 249.3 L527.0 249.9 L533.9 250.6 L540.9 251.3 L547.8 253.8 L554.8 256.1 L561.7 258.4 L568.6 260.5 L575.6 262.6 L582.5 264.4 L589.4 266.2 L596.4 268.0 L603.3 269.8 L610.2 271.6 L617.2 270.7 L624.1 269.7 L631.1 268.8 L638.0 267.9 L644.9 267.1 L651.9 266.3 L658.8 265.5 L665.8 264.8 L672.7 264.1 L679.6 263.4 L686.6 262.2 L693.5 260.9 L700.4 259.7 L707.4 258.5 L714.3 257.3 L721.2 256.2 L728.2 255.0 L735.1 254.0 L742.1 253.2 L749.0 252.4 L749.0 143.0 Z" fill="#ff5000"/>
<path d="M194.0 143.0 L194.0 169.7 L200.9 170.2 L207.9 170.7 L214.8 171.2 L221.8 171.7 L228.7 172.1 L235.6 172.6 L242.6 173.1 L249.5 173.6 L256.4 174.0 L263.4 174.5 L270.3 176.1 L277.2 177.8 L284.2 179.7 L291.1 182.0 L298.1 184.8 L305.0 187.7 L311.9 190.2 L318.9 192.7 L325.8 195.2 L332.8 197.7 L339.7 197.8 L346.6 198.0 L353.6 198.2 L360.5 198.3 L367.4 198.5 L374.4 198.7 L381.3 198.9 L388.2 199.1 L395.2 199.3 L402.1 199.5 L409.1 203.2 L416.0 206.6 L422.9 209.8 L429.9 213.2 L436.8 216.7 L443.8 220.4 L450.7 224.2 L457.6 228.1 L464.6 232.2 L471.5 236.5 L478.4 236.5 L485.4 236.5 L492.3 236.5 L499.2 236.5 L506.2 236.5 L513.1 236.5 L520.1 236.5 L527.0 236.5 L533.9 236.5 L540.9 236.5 L547.8 239.2 L554.8 241.8 L561.7 244.4 L568.6 246.9 L575.6 249.3 L582.5 251.7 L589.4 253.8 L596.4 255.9 L603.3 257.9 L610.2 259.8 L617.2 259.0 L624.1 258.2 L631.1 257.3 L638.0 256.5 L644.9 255.7 L651.9 254.9 L658.8 254.1 L665.8 253.3 L672.7 252.6 L679.6 251.8 L686.6 250.7 L693.5 249.8 L700.4 248.9 L707.4 248.1 L714.3 247.3 L721.2 246.6 L728.2 246.0 L735.1 245.3 L742.1 244.8 L749.0 244.2 L749.0 143.0 Z" fill="#ff4000"/>
<path d="M194.0 143.0 L194.0 156.8 L200.9 157.6 L207.9 158.5 L214.8 159.3 L221.8 160.2 L228.7 161.0 L235.6 161.8 L242.6 162.6 L249.5 163.4 L256.4 164.2 L263.4 165.0 L270.3 166.4 L277.2 167.7 L284.2 169.0 L291.1 170.6 L298.1 172.3 L305.0 174.2 L311.9 176.4 L318.9 179.0 L325.8 182.0 L332.8 185.5 L339.7 185.3 L346.6 185.2 L353.6 185.1 L360.5 184.9 L367.4 184.8 L374.4 184.7 L381.3 184.5 L388.2 184.4 L395.2 184.3 L402.1 184.2 L409.1 187.7 L416.0 191.3 L422.9 195.1 L429.9 198.8 L436.8 202.5 L443.8 206.1 L450.7 209.6 L457.6 213.3 L464.6 217.1 L471.5 221.0 L478.4 221.1 L485.4 221.2 L492.3 221.2 L499.2 221.3 L506.2 221.3 L513.1 221.4 L520.1 221.5 L527.0 221.5 L533.9 221.6 L540.9 221.6 L547.8 224.6 L554.8 227.5 L561.7 230.2 L568.6 232.9 L575.6 235.5 L582.5 238.1 L589.4 240.5 L596.4 243.0 L603.3 245.3 L610.2 247.6 L617.2 246.8 L624.1 246.0 L631.1 245.2 L638.0 244.4 L644.9 243.7 L651.9 242.9 L658.8 242.2 L665.8 241.5 L672.7 240.8 L679.6 240.1 L686.6 239.6 L693.5 239.0 L700.4 238.6 L707.4 238.1 L714.3 237.7 L721.2 237.4 L728.2 237.0 L735.1 236.7 L742.1 236.4 L749.0 236.1 L749.0 143.0 Z" fill="#ff3000"/>
<path d="M194.0 143.0 L194.0 143.0 L200.9 143.0 L207.9 143.8 L214.8 144.7 L221.8 145.6 L228.7 146.5 L235.6 147.4 L242.6 148.3 L249.5 149.2 L256.4 150.0 L263.4 150.9 L270.3 152.2 L277.2 153.6 L284.2 155.1 L291.1 156.6 L298.1 158.3 L305.0 160.0 L311.9 161.9 L318.9 163.8 L325.8 166.0 L332.8 168.0 L339.7 169.3 L346.6 170.3 L353.6 171.1 L360.5 171.8 L367.4 172.4 L374.4 172.9 L381.3 173.4 L388.2 173.8 L395.2 174.2 L402.1 174.5 L409.1 176.1 L416.0 177.8 L422.9 179.8 L429.9 182.7 L436.8 186.4 L443.8 190.2 L450.7 194.1 L457.6 198.1 L464.6 201.8 L471.5 205.5 L478.4 205.6 L485.4 205.8 L492.3 205.9 L499.2 206.0 L506.2 206.1 L513.1 206.2 L520.1 206.3 L527.0 206.5 L533.9 206.6 L540.9 206.7 L547.8 209.9 L554.8 213.0 L561.7 216.0 L568.6 218.9 L575.6 221.7 L582.5 224.5 L589.4 227.2 L596.4 229.7 L603.3 232.3 L610.2 234.7 L617.2 234.0 L624.1 233.4 L631.1 232.7 L638.0 232.1 L644.9 231.4 L651.9 230.8 L658.8 230.2 L665.8 229.6 L672.7 229.0 L679.6 228.5 L686.6 227.9 L693.5 227.2 L700.4 226.5 L707.4 225.8 L714.3 225.0 L721.2 224.3 L728.2 223.6 L735.1 222.9 L742.1 222.2 L749.0 221.5 L749.0 143.0 Z" fill="#ff2000"/>
<path d="M194.0 143.0 L194.0 143.0 L200.9 143.0 L207.9 143.0 L214.8 143.0 L221.8 143.0 L228.7 143.0 L235.6 143.0 L242.6 143.0 L249.5 143.0 L256.4 143.0 L263.4 143.0 L270.3 143.0 L277.2 143.0 L284.2 143.0 L291.1 143.0 L298.1 143.0 L305.0 143.3 L311.9 144.6 L318.9 146.0 L325.8 147.5 L332.8 149.1 L339.7 151.4 L346.6 153.5 L353.6 155.5 L360.5 157.3 L367.4 159.1 L374.4 160.7 L381.3 162.3 L388.2 163.7 L395.2 165.1 L402.1 166.2 L409.1 167.4 L416.0 168.6 L422.9 170.1 L429.9 171.7 L436.8 173.5 L443.8 175.6 L450.7 178.1 L457.6 181.1 L464.6 185.0 L471.5 189.0 L478.4 189.1 L485.4 189.3 L492.3 189.5 L499.2 189.6 L506.2 189.8 L513.1 189.9 L520.1 190.1 L527.0 190.2 L533.9 190.4 L540.9 190.5 L547.8 194.2 L554.8 198.1 L561.7 201.6 L568.6 204.9 L575.6 207.9 L582.5 210.9 L589.4 213.7 L596.4 216.5 L603.3 219.2 L610.2 221.8 L617.2 221.1 L624.1 220.3 L631.1 219.4 L638.0 218.5 L644.9 217.6 L651.9 216.6 L658.8 215.6 L665.8 214.5 L672.7 213.4 L679.6 212.2 L686.6 211.6 L693.5 211.1 L700.4 210.6 L707.4 210.2 L714.3 209.8 L721.2 209.5 L728.2 209.1 L735.1 208.8 L742.1 208.5 L749.0 208.3 L749.0 143.0 Z" fill="#ff1000"/>
<path d="M194.0 143.0 L194.0 143.0 L200.9 143.0 L207.9 143.0 L214.8 143.0 L221.8 143.0 L228.7 143.0 L235.6 143.0 L242.6 143.0 L249.5 143.0 L256.4 143.0 L263.4 143.0 L270.3 143.0 L277.2 143.0 L284.2 143.0 L291.1 143.0 L298.1 143.0 L305.0 143.0 L311.9 143.0 L318.9 143.0 L325.8 143.0 L332.8 143.0 L339.7 143.0 L346.6 143.0 L353.6 143.0 L360.5 143.0 L367.4 143.0 L374.4 145.0 L381.3 147.0 L388.2 148.9 L395.2 150.6 L402.1 152.3 L409.1 154.1 L416.0 155.8 L422.9 157.6 L429.9 159.4 L436.8 161.2 L443.8 163.1 L450.7 164.9 L457.6 166.8 L464.6 168.9 L471.5 171.5 L478.4 172.0 L485.4 172.6 L492.3 173.0 L499.2 173.5 L506.2 173.9 L513.1 174.3 L520.1 174.7 L527.0 175.1 L533.9 175.4 L540.9 175.7 L547.8 177.9 L554.8 180.3 L561.7 183.6 L568.6 187.6 L575.6 192.3 L582.5 197.0 L589.4 200.2 L596.4 203.2 L603.3 206.2 L610.2 209.0 L617.2 207.9 L624.1 206.8 L631.1 205.6 L638.0 204.4 L644.9 203.2 L651.9 201.8 L658.8 200.5 L665.8 199.4 L672.7 198.2 L679.6 197.0 L686.6 197.1 L693.5 197.2 L700.4 197.3 L707.4 197.4 L714.3 197.4 L721.2 197.5 L728.2 197.6 L735.1 197.7 L742.1 197.7 L749.0 197.8 L749.0 143.0 Z" fill="#ff0000"/>
<path d="M194.0 143.0 L194.0 143.0 L200.9 143.0 L207.9 143.0 L214.8 143.0 L221.8 143.0 L228.7 143.0 L235.6 143.0 L242.6 143.0 L249.5 143.0 L256.4 143.0 L263.4 143.0 L270.3 143.0 L277.2 143.0 L284.2 143.0 L291.1 143.0 L298.1 143.0 L305.0 143.0 L311.9 143.0 L318.9 143.0 L325.8 143.0 L332.8 143.0 L339.7 143.0 L346.6 143.0 L353.6 143.0 L360.5 143.0 L367.4 143.0 L374.4 143.0 L381.3 143.0 L388.2 143.0 L395.2 143.0 L402.1 143.0 L409.1 143.0 L416.0 143.0 L422.9 143.3 L429.9 145.0 L436.8 146.8 L443.8 148.5 L450.7 150.3 L457.6 152.1 L464.6 153.9 L471.5 155.7 L478.4 156.3 L485.4 156.8 L492.3 157.4 L499.2 157.9 L506.2 158.5 L513.1 159.1 L520.1 159.8 L527.0 160.5 L533.9 161.1 L540.9 161.9 L547.8 164.6 L554.8 167.0 L561.7 169.0 L568.6 171.2 L575.6 173.3 L582.5 175.6 L589.4 177.9 L596.4 182.5 L603.3 188.5 L610.2 196.0 L617.2 193.3 L624.1 191.2 L631.1 189.7 L638.0 188.4 L644.9 187.4 L651.9 186.6 L658.8 185.9 L665.8 185.4 L672.7 184.9 L679.6 184.4 L686.6 185.0 L693.5 185.5 L700.4 185.9 L707.4 186.2 L714.3 186.4 L721.2 186.7 L728.2 186.9 L735.1 187.0 L742.1 187.2 L749.0 187.3 L749.0 143.0 Z" fill="#ef0000"/>
<path d="M194.0 143.0 L194.0 143.0 L200.9 143.0 L207.9 143.0 L214.8 143.0 L221.8 143.0 L228.7 143.0 L235.6 143.0 L242.6 143.0 L249.5 143.0 L256.4 143.0 L263.4 143.0 L270.3 143.0 L277.2 143.0 L284.2 143.0 L291.1 143.0 L298.1 143.0 L305.0 143.0 L311.9 143.0 L318.9 143.0 L325.8 143.0 L332.8 143.0 L339.7 143.0 L346.6 143.0 L353.6 143.0 L360.5 143.0 L367.4 143.0 L374.4 143.0 L381.3 143.0 L388.2 143.0 L395.2 143.0 L402.1 143.0 L409.1 143.0 L416.0 143.0 L422.9 143.0 L429.9 143.0 L436.8 143.0 L443.8 143.0 L450.7 143.0 L457.6 143.0 L464.6 143.0 L471.5 143.0 L478.4 143.0 L485.4 143.0 L492.3 143.0 L499.2 143.0 L506.2 143.0 L513.1 143.0 L520.1 143.0 L527.0 143.3 L533.9 143.6 L540.9 144.0 L547.8 147.2 L554.8 150.2 L561.7 153.1 L568.6 155.9 L575.6 158.5 L582.5 161.1 L589.4 163.6 L596.4 166.0 L603.3 168.2 L610.2 170.5 L617.2 171.1 L624.1 171.6 L631.1 172.0 L638.0 172.4 L644.9 172.7 L651.9 173.0 L658.8 173.3 L665.8 173.6 L672.7 173.8 L679.6 174.1 L686.6 175.0 L693.5 176.0 L700.4 177.0 L707.4 178.1 L714.3 178.9 L721.2 179.6 L728.2 180.2 L735.1 180.8 L742.1 181.3 L749.0 181.8 L749.0 143.0 Z" fill="#df0000"/>
<path d="M194.0 143.0 L194.0 143.0 L200.9 143.0 L207.9 143.0 L214.8 143.0 L221.8 143.0 L228.7 143.0 L235.6 143.0 L242.6 143.0 L249.5 143.0 L256.4 143.0 L263.4 143.0 L270.3 143.0 L277.2 143.0 L284.2 143.0 L291.1 143.0 L298.1 143.0 L305.0 143.0 L311.9 143.0 L318.9 143.0 L325.8 143.0 L332.8 143.0 L339.7 143.0 L346.6 143.0 L353.6 143.0 L360.5 143.0 L367.4 143.0 L374.4 143.0 L381.3 143.0 L388.2 143.0 L395.2 143.0 L402.1 143.0 L409.1 143.0 L416.0 143.0 L422.9 143.0 L429.9 143.0 L436.8 143.0 L443.8 143.0 L450.7 143.0 L457.6 143.0 L464.6 143.0 L471.5 143.0 L478.4 143.0 L485.4 143.0 L492.3 143.0 L499.2 143.0 L506.2 143.0 L513.1 143.0 L520.1 143.0 L527.0 143.0 L533.9 143.0 L540.9 143.0 L547.8 143.0 L554.8 143.0 L561.7 143.0 L568.6 143.0 L575.6 143.0 L582.5 145.3 L589.4 148.0 L596.4 150.7 L603.3 153.3 L610.2 155.8 L617.2 156.7 L624.1 157.5 L631.1 158.4 L638.0 159.2 L644.9 160.1 L651.9 160.9 L658.8 161.7 L665.8 162.6 L672.7 163.4 L679.6 164.2 L686.6 165.5 L693.5 166.5 L700.4 167.4 L707.4 168.3 L714.3 169.3 L721.2 170.2 L728.2 171.2 L735.1 172.2 L742.1 173.3 L749.0 174.3 L749.0 143.0 Z" fill="#cf0000"/>
<path d="M194.0 143.0 L194.0 143.0 L200.9 143.0 L207.9 143.0 L214.8 143.0 L221.8 143.0 L228.7 143.0 L235.6 143.0 L242.6 143.0 L249.5 143.0 L256.4 143.0 L263.4 143.0 L270.3 143.0 L277.2 143.0 L284.2 143.0 L291.1 143.0 L298.1 143.0 L305.0 143.0 L311.9 143.0 L318.9 143.0 L325.8 143.0 L332.8 143.0 L339.7 143.0 L346.6 143.0 L353.6 143.0 L360.5 143.0 L367.4 143.0 L374.4 143.0 L381.3 143.0 L388.2 143.0 L395.2 143.0 L402.1 143.0 L409.1 143.0 L416.0 143.0 L422.9 143.0 L429.9 143.0 L436.8 143.0 L443.8 143.0 L450.7 143.0 L457.6 143.0 L464.6 143.0 L471.5 143.0 L478.4 143.0 L485.4 143.0 L492.3 143.0 L499.2 143.0 L506.2 143.0 L513.1 143.0 L520.1 143.0 L527.0 143.0 L533.9 143.0 L540.9 143.0 L547.8 143.0 L554.8 143.0 L561.7 143.0 L568.6 143.0 L575.6 143.0 L582.5 143.0 L589.4 143.0 L596.4 143.0 L603.3 143.0 L610.2 143.0 L617.2 143.0 L624.1 143.0 L631.1 143.8 L638.0 144.8 L644.9 145.7 L651.9 146.6 L658.8 147.5 L665.8 148.3 L672.7 149.2 L679.6 150.1 L686.6 151.9 L693.5 153.6 L700.4 155.2 L707.4 156.7 L714.3 158.0 L721.2 159.3 L728.2 160.5 L735.1 161.7 L742.1 162.8 L749.0 163.9 L749.0 143.0 Z" fill="#bf0000"/>
<path d="M194.0 143.0 L194.0 143.0 L200.9 143.0 L207.9 143.0 L214.8 143.0 L221.8 143.0 L228.7 143.0 L235.6 143.0 L242.6 143.0 L249.5 143.0 L256.4 143.0 L263.4 143.0 L270.3 143.0 L277.2 143.0 L284.2 143.0 L291.1 143.0 L298.1 143.0 L305.0 143.0 L311.9 143.0 L318.9 143.0 L325.8 143.0 L332.8 143.0 L339.7 143.0 L346.6 143.0 L353.6 143.0 L360.5 143.0 L367.4 143.0 L374.4 143.0 L381.3 143.0 L388.2 143.0 L395.2 143.0 L402.1 143.0 L409.1 143.0 L416.0 143.0 L422.9 143.0 L429.9 143.0 L436.8 143.0 L443.8 143.0 L450.7 143.0 L457.6 143.0 L464.6 143.0 L471.5 143.0 L478.4 143.0 L485.4 143.0 L492.3 143.0 L499.2 143.0 L506.2 143.0 L513.1 143.0 L520.1 143.0 L527.0 143.0 L533.9 143.0 L540.9 143.0 L547.8 143.0 L554.8 143.0 L561.7 143.0 L568.6 143.0 L575.6 143.0 L582.5 143.0 L589.4 143.0 L596.4 143.0 L603.3 143.0 L610.2 143.0 L617.2 143.0 L624.1 143.0 L631.1 143.0 L638.0 143.0 L644.9 143.0 L651.9 143.0 L658.8 143.0 L665.8 143.0 L672.7 143.0 L679.6 143.0 L686.6 143.0 L693.5 143.0 L700.4 143.0 L707.4 144.7 L714.3 146.5 L721.2 148.1 L728.2 149.7 L735.1 151.1 L742.1 152.5 L749.0 153.7 L749.0 143.0 Z" fill="#af0000"/>
<path d="M194.0 143.0 L194.0 143.0 L200.9 143.0 L207.9 143.0 L214.8 143.0 L221.8 143.0 L228.7 143.0 L235.6 143.0 L242.6 143.0 L249.5 143.0 L256.4 143.0 L263.4 143.0 L270.3 143.0 L277.2 143.0 L284.2 143.0 L291.1 143.0 L298.1 143.0 L305.0 143.0 L311.9 143.0 L318.9 143.0 L325.8 143.0 L332.8 143.0 L339.7 143.0 L346.6 143.0 L353.6 143.0 L360.5 143.0 L367.4 143.0 L374.4 143.0 L381.3 143.0 L388.2 143.0 L395.2 143.0 L402.1 143.0 L409.1 143.0 L416.0 143.0 L422.9 143.0 L429.9 143.0 L436.8 143.0 L443.8 143.0 L450.7 143.0 L457.6 143.0 L464.6 143.0 L471.5 143.0 L478.4 143.0 L485.4 143.0 L492.3 143.0 L499.2 143.0 L506.2 143.0 L513.1 143.0 L520.1 143.0 L527.0 143.0 L533.9 143.0 L540.9 143.0 L547.8 143.0 L554.8 143.0 L561.7 143.0 L568.6 143.0 L575.6 143.0 L582.5 143.0 L589.4 143.0 L596.4 143.0 L603.3 143.0 L610.2 143.0 L617.2 143.0 L624.1 143.0 L631.1 143.0 L638.0 143.0 L644.9 143.0 L651.9 143.0 L658.8 143.0 L665.8 143.0 L672.7 143.0 L679.6 143.0 L686.6 143.0 L693.5 143.0 L700.4 143.0 L707.4 143.0 L714.3 143.0 L721.2 143.0 L728.2 143.0 L735.1 143.0 L742.1 143.0 L749.0 144.0 L749.0 143.0 Z" fill="#9f0000"/>
 </g>
 <g fill="#1a0a0a">
<rect x="192" y="251" width="3" height="3"/>
<rect x="192" y="282" width="3" height="3"/>
<rect x="192" y="301" width="3" height="3"/>
<rect x="192" y="359" width="3" height="3"/>
<rect x="192" y="395" width="3" height="3"/>
<rect x="192" y="406" width="3" height="3"/>
<rect x="192" y="441" width="3" height="3"/>
<rect x="192" y="502" width="3" height="3"/>
<rect x="192" y="516" width="3" height="3"/>
<rect x="192" y="575" width="3" height="3"/>
<rect x="331" y="205" width="3" height="3"/>
<rect x="331" y="223" width="3" height="3"/>
<rect x="331" y="258" width="3" height="3"/>
<rect x="331" y="302" width="3" height="3"/>
<rect x="331" y="342" width="3" height="3"/>
<rect x="331" y="380" width="3" height="3"/>
<rect x="331" y="423" width="3" height="3"/>
<rect x="331" y="500" width="3" height="3"/>
<rect x="331" y="512" width="3" height="3"/>
<rect x="331" y="554" width="3" height="3"/>
<rect x="470" y="235" width="3" height="3"/>
<rect x="470" y="277" width="3" height="3"/>
<rect x="470" y="326" width="3" height="3"/>
<rect x="470" y="360" width="3" height="3"/>
<rect x="470" y="411" width="3" height="3"/>
<rect x="470" y="465" width="3" height="3"/>
<rect x="470" y="478" width="3" height="3"/>
<rect x="470" y="533" width="3" height="3"/>
<rect x="470" y="567" width="3" height="3"/>
<rect x="609" y="176" width="3" height="3"/>
<rect x="609" y="250" width="3" height="3"/>
<rect x="609" y="287" width="3" height="3"/>
<rect x="609" y="332" width="3" height="3"/>
<rect x="609" y="373" width="3" height="3"/>
<rect x="609" y="426" width="3" height="3"/>
<rect x="609" y="468" width="3" height="3"/>
<rect x="609" y="521" width="3" height="3"/>
<rect x="609" y="554" width="3" height="3"/>
<rect x="609" y="603" width="3" height="3"/>
<rect x="748" y="142" width="3" height="3"/>
<rect x="748" y="178" width="3" height="3"/>
<rect x="748" y="234" width="3" height="3"/>
<rect x="748" y="277" width="3" height="3"/>
<rect x="748" y="362" width="3" height="3"/>
<rect x="748" y="409" width="3" height="3"/>
<rect x="748" y="428" width="3" height="3"/>
<rect x="748" y="472" width="3" height="3"/>
<rect x="748" y="517" width="3" height="3"/>
<rect x="748" y="552" width="3" height="3"/>
 </g>
 <rect x="124.5" y="129.5" width="694.0" height="502.0" fill="none" stroke="#262626"/>
 <g font-size="20" fill="#262626" shape-rendering="auto">
 <text x="116" y="638.7" text-anchor="end">-10</text><text x="116" y="575.7" text-anchor="end">0</text><text x="116" y="512.7" text-anchor="end">10</text><text x="116" y="449.7" text-anchor="end">20</text><text x="116" y="387.7" text-anchor="end">30</text><text x="116" y="324.7" text-anchor="end">40</text><text x="116" y="261.7" text-anchor="end">50</text><text x="116" y="198.7" text-anchor="end">60</text><text x="116" y="136.7" text-anchor="end">70</text>
 <text x="124.5" y="657" text-anchor="middle">500</text><text x="193.5" y="657" text-anchor="middle">1000</text><text x="263.5" y="657" text-anchor="middle">1500</text><text x="332.5" y="657" text-anchor="middle">2000</text><text x="402.5" y="657" text-anchor="middle">2500</text><text x="471.5" y="657" text-anchor="middle">3000</text><text x="541.5" y="657" text-anchor="middle">3500</text><text x="610.5" y="657" text-anchor="middle">4000</text><text x="679.5" y="657" text-anchor="middle">4500</text><text x="749.5" y="657" text-anchor="middle">5000</text><text x="818.5" y="657" text-anchor="middle">5500</text>
 </g>
 <text x="471.5" y="683" font-size="22" fill="#262626" text-anchor="middle">n [U/min]</text>
 <text transform="translate(79,380) rotate(-90)" x="0" y="0" font-size="22" fill="#262626" text-anchor="middle">M [Nm]</text>
 <g>
<rect x="124.50" y="697" width="11.14" height="29" fill="#00008f"/>
<rect x="135.34" y="697" width="11.14" height="29" fill="#00009f"/>
<rect x="146.19" y="697" width="11.14" height="29" fill="#0000af"/>
<rect x="157.03" y="697" width="11.14" height="29" fill="#0000bf"/>
<rect x="167.88" y="697" width="11.14" height="29" fill="#0000cf"/>
<rect x="178.72" y="697" width="11.14" height="29" fill="#0000df"/>
<rect x="189.56" y="697" width="11.14" height="29" fill="#0000ef"/>
<rect x="200.41" y="697" width="11.14" height="29" fill="#0000ff"/>
<rect x="211.25" y="697" width="11.14" height="29" fill="#0010ff"/>
<rect x="222.09" y="697" width="11.14" height="29" fill="#0020ff"/>
<rect x="232.94" y="697" width="11.14" height="29" fill="#0030ff"/>
<rect x="243.78" y="697" width="11.14" height="29" fill="#0040ff"/>
<rect x="254.62" y="697" width="11.14" height="29" fill="#0050ff"/>
<rect x="265.47" y="697" width="11.14" height="29" fill="#0060ff"/>
<rect x="276.31" y="697" width="11.14" height="29" fill="#0070ff"/>
<rect x="287.16" y="697" width="11.14" height="29" fill="#0080ff"/>
<rect x="298.00" y="697" width="11.14" height="29" fill="#008fff"/>
<rect x="308.84" y="697" width="11.14" height="29" fill="#009fff"/>
<rect x="319.69" y="697" width="11.14" height="29" fill="#00afff"/>
<rect x="330.53" y="697" width="11.14" height="29" fill="#00bfff"/>
<rect x="341.38" y="697" width="11.14" height="29" fill="#00cfff"/>
<rect x="352.22" y="697" width="11.14" height="29" fill="#00dfff"/>
<rect x="363.06" y="697" width="11.14" height="29" fill="#00efff"/>
<rect x="373.91" y="697" width="11.14" height="29" fill="#00ffff"/>
<rect x="384.75" y="697" width="11.14" height="29" fill="#10ffef"/>
<rect x="395.59" y="697" width="11.14" height="29" fill="#20ffdf"/>
<rect x="406.44" y="697" width="11.14" height="29" fill="#30ffcf"/>
<rect x="417.28" y="697" width="11.14" height="29" fill="#40ffbf"/>
<rect x="428.12" y="697" width="11.14" height="29" fill="#50ffaf"/>
<rect x="438.97" y="697" width="11.14" height="29" fill="#60ff9f"/>
<rect x="449.81" y="697" width="11.14" height="29" fill="#70ff8f"/>
<rect x="460.66" y="697" width="11.14" height="29" fill="#80ff80"/>
<rect x="471.50" y="697" width="11.14" height="29" fill="#8fff70"/>
<rect x="482.34" y="697" width="11.14" height="29" fill="#9fff60"/>
<rect x="493.19" y="697" width="11.14" height="29" fill="#afff50"/>
<rect x="504.03" y="697" width="11.14" height="29" fill="#bfff40"/>
<rect x="514.88" y="697" width="11.14" height="29" fill="#cfff30"/>
<rect x="525.72" y="697" width="11.14" height="29" fill="#dfff20"/>
<rect x="536.56" y="697" width="11.14" height="29" fill="#efff10"/>
<rect x="547.41" y="697" width="11.14" height="29" fill="#ffff00"/>
<rect x="558.25" y="697" width="11.14" height="29" fill="#ffef00"/>
<rect x="569.09" y="697" width="11.14" height="29" fill="#ffdf00"/>
<rect x="579.94" y="697" width="11.14" height="29" fill="#ffcf00"/>
<rect x="590.78" y="697" width="11.14" height="29" fill="#ffbf00"/>
<rect x="601.62" y="697" width="11.14" height="29" fill="#ffaf00"/>
<rect x="612.47" y="697" width="11.14" height="29" fill="#ff9f00"/>
<rect x="623.31" y="697" width="11.14" height="29" fill="#ff8f00"/>
<rect x="634.16" y="697" width="11.14" height="29" fill="#ff8000"/>
<rect x="645.00" y="697" width="11.14" height="29" fill="#ff7000"/>
<rect x="655.84" y="697" width="11.14" height="29" fill="#ff6000"/>
<rect x="666.69" y="697" width="11.14" height="29" fill="#ff5000"/>
<rect x="677.53" y="697" width="11.14" height="29" fill="#ff4000"/>
<rect x="688.38" y="697" width="11.14" height="29" fill="#ff3000"/>
<rect x="699.22" y="697" width="11.14" height="29" fill="#ff2000"/>
<rect x="710.06" y="697" width="11.14" height="29" fill="#ff1000"/>
<rect x="720.91" y="697" width="11.14" height="29" fill="#ff0000"/>
<rect x="731.75" y="697" width="11.14" height="29" fill="#ef0000"/>
<rect x="742.59" y="697" width="11.14" height="29" fill="#df0000"/>
<rect x="753.44" y="697" width="11.14" height="29" fill="#cf0000"/>
<rect x="764.28" y="697" width="11.14" height="29" fill="#bf0000"/>
<rect x="775.12" y="697" width="11.14" height="29" fill="#af0000"/>
<rect x="785.97" y="697" width="11.14" height="29" fill="#9f0000"/>
<rect x="796.81" y="697" width="11.14" height="29" fill="#8f0000"/>
<rect x="807.66" y="697" width="11.14" height="29" fill="#800000"/>
 </g>
 <rect x="124.5" y="697.5" width="694" height="28" fill="none" stroke="#262626"/>
 <path d="M224.5 725V719.5M323.5 725V719.5M422.5 725V719.5M521.5 725V719.5M620.5 725V719.5M719.5 725V719.5" stroke="#262626"/>
 <g font-size="18" fill="#262626" shape-rendering="auto">
 <text x="124.5" y="749" text-anchor="middle">0</text><text x="223.6" y="749" text-anchor="middle">1</text><text x="322.8" y="749" text-anchor="middle">2</text><text x="421.9" y="749" text-anchor="middle">3</text><text x="521.1" y="749" text-anchor="middle">4</text><text x="620.2" y="749" text-anchor="middle">5</text><text x="719.4" y="749" text-anchor="middle">6</text><text x="818.5" y="749" text-anchor="middle">7</text>
 </g>
 <text x="472" y="772" font-size="18" fill="#262626" text-anchor="middle">pme [bar]</text>
</svg>
</body></html>
